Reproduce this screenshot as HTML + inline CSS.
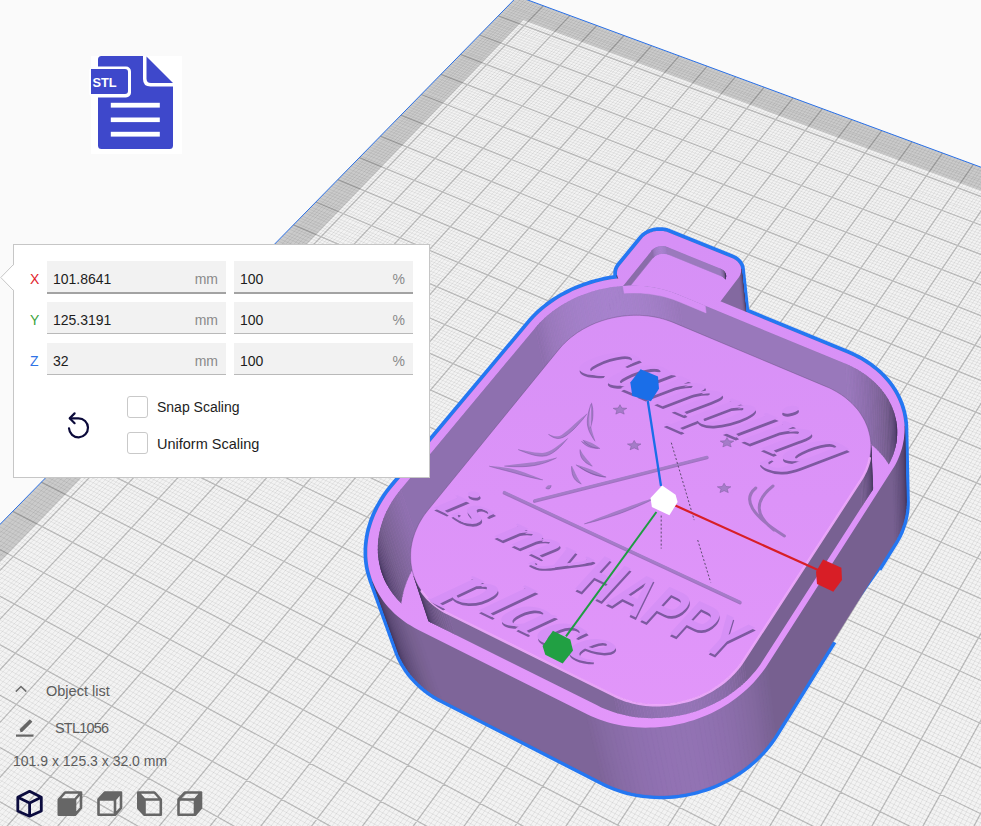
<!DOCTYPE html>
<html><head><meta charset="utf-8">
<style>
html,body{margin:0;padding:0;width:981px;height:826px;overflow:hidden;background:#fafafa;font-family:"Liberation Sans",sans-serif;}
.vp{position:absolute;left:0;top:0;}
.abs{position:absolute;}
#panel{position:absolute;left:13px;top:244px;width:415px;height:232px;border:1px solid #c6c6c6;background:#fff;}
.lbl{position:absolute;font-size:14px;line-height:16px;}
.fld{position:absolute;width:179px;height:31px;background:#f2f2f2;border-bottom:1px solid #b9b9b9;}
.fld.focus{border-bottom:2px solid #a3a3a3;height:31px;}
.fld .v{position:absolute;left:6px;top:10px;font-size:14px;line-height:16px;color:#1d1d1d;}
.fld .u{position:absolute;right:8px;top:10px;font-size:14px;line-height:16px;color:#8a8a8a;}
.cb{position:absolute;left:113px;width:19px;height:20px;border:1px solid #c9c9c9;border-radius:3px;background:#fff;}
.cbt{position:absolute;left:143px;font-size:14.5px;line-height:16px;color:#1d1d1d;}
.gray{color:#5f5f5f;}
</style></head><body>
<svg class="vp" width="981" height="826" viewBox="0 0 981 826">
<rect width="981" height="826" fill="#fafafa"/>
<polygon points="517.5,-3.8 1873.2,496.4 1316.3,2818.7 -691.1,1229.7" fill="#cbcbcb"/>
<polygon points="523.4,20.1 1867.2,521.5 1316.3,2818.7 -664.5,1250.7" fill="#f3f3f3"/>
<path d="M520 0L0 533M524 0L0 537M527 0L0 542M530 1L0 547M533 2L0 551M535 3L0 556M538 4L0 561M541 5L0 566M546 7L0 575M549 8L0 580M551 9L0 585M554 10L0 590M557 11L0 595M559 12L0 599M562 13L0 604M565 14L0 609M567 15L0 614M573 17L0 624M575 18L0 629M578 19L0 634M581 20L0 639M583 21L0 644M586 22L0 649M589 23L0 654M591 24L0 659M594 25L0 665M600 26L0 675M602 27L0 680M605 28L0 685M608 29L0 691M610 31L0 696M613 32L0 701M616 33L0 706M619 34L0 712M621 35L0 717M627 37L0 728M629 38L0 733M632 39L0 739M635 40L0 744M638 41L0 750M640 42L0 755M643 43L0 761M646 44L0 766M649 45L0 772M654 47L0 783M657 48L-0 788M660 49L0 794M663 50L0 800M665 51L0 805M668 52L0 811M671 53L0 817M674 54L0 823M676 55L2 826M682 57L12 826M685 58L17 826M688 59L22 826M690 60L27 826M693 61L33 826M696 62L38 826M699 63L43 826M702 64L48 826M704 65L53 826M710 67L63 826M713 68L68 826M716 69L73 826M719 70L78 826M721 71L83 826M724 72L88 826M727 74L93 826M730 75L98 826M733 76L104 826M738 78L114 826M741 79L119 826M744 80L124 826M747 81L129 826M750 82L134 826M753 83L139 826M756 84L144 826M758 85L149 826M761 86L154 826M767 88L164 826M770 89L170 826M773 90L175 826M776 92L180 826M779 93L185 826M782 94L190 826M784 95L195 826M787 96L200 826M790 97L205 826M796 99L215 826M799 100L220 826M802 101L225 826M805 102L230 826M808 103L236 826M811 104L241 826M814 105L246 826M816 107L251 826M819 108L256 826M825 110L266 826M828 111L271 826M831 112L276 826M834 113L281 826M837 114L286 826M840 115L291 826M843 116L296 826M846 117L302 826M849 119L307 826M855 121L317 826M858 122L322 826M861 123L327 826M864 124L332 826M867 125L337 826M870 126L342 826M873 127L347 826M876 128L352 826M879 130L357 826M885 132L368 826M888 133L373 826M891 134L378 826M894 135L383 826M897 136L388 826M900 137L393 826M903 138L398 826M906 140L403 826M909 141L408 826M915 143L418 826M918 144L424 826M921 145L429 826M924 146L434 826M927 147L439 826M930 149L444 826M933 150L449 826M936 151L454 826M939 152L459 826M946 154L469 826M949 155L474 826M952 156L479 826M955 158L485 826M958 159L490 826M961 160L495 826M964 161L500 826M967 162L505 826M970 163L510 826M976 166L520 826M980 167L525 826M981 170L530 826M981 176L535 826M981 182L541 826M981 188L546 826M981 193L551 826M981 199L556 826M981 205L561 826M981 217L571 826M981 223L576 826M981 229L581 826M981 235L586 826M981 241L591 826M981 247L597 826M981 253L602 826M981 259L607 826M981 265L612 826M981 278L622 826M981 284L627 826M981 290L632 826M981 297L637 826M981 303L642 826M981 310L648 826M981 316L653 826M981 323L658 826M981 329L663 826M981 342L673 826M981 349L678 826M981 356L683 826M981 362L688 826M981 369L693 826M981 376L698 826M981 383L704 826M981 390L709 826M981 397L714 826M981 411L724 826M981 418L729 826M981 425L734 826M981 432L739 826M981 439L744 826M981 446L749 826M981 454L755 826M981 461L760 826M981 468L765 826M981 483L775 826M981 490L780 826M981 498L785 826M981 506L790 826M981 513L795 826M981 521L800 826M981 529L806 826M981 536L811 826M981 544L816 826M981 560L826 826M981 568L831 826M981 576L836 826M981 584L841 826M981 592L846 826M981 600L851 826M981 608L857 826M981 617L862 826M981 625L867 826M981 642L877 826M981 650L882 826M981 659L887 826M981 667L892 826M981 676L897 826M981 685L903 826M981 694L908 826M981 702L913 826M981 711L918 826M981 729L928 826M981 738L933 826M981 747L938 826M981 756L943 826M981 766L948 826M981 775L954 826M981 784L959 826M981 794L964 826M981 803L969 826M981 822L979 826M518 0L981 171M513 1L981 174M511 3L981 177M509 5L981 180M507 6L981 182M506 8L981 185M504 10L981 188M502 12L981 191M500 14L981 194M496 18L981 199M495 20L981 202M493 22L981 205M491 23L981 208M489 25L981 211M487 27L981 214M485 29L981 216M483 31L981 219M481 33L981 222M478 37L981 228M476 39L981 231M474 41L981 234M472 43L981 237M470 45L981 240M468 47L981 243M466 49L981 246M464 51L981 249M462 52L981 252M459 56L981 258M457 58L981 261M455 60L981 264M453 62L981 267M451 64L981 270M449 66L981 273M447 68L981 276M445 70L981 279M443 72L981 282M439 76L981 288M437 78L981 291M435 80L981 294M433 82L981 297M431 84L981 300M429 86L981 303M427 88L981 306M425 90L981 310M423 93L981 313M419 97L981 319M417 99L981 322M415 101L981 325M413 103L981 329M411 105L981 332M409 107L981 335M407 109L981 338M405 111L981 341M403 113L981 345M399 117L981 351M397 119L981 354M395 121L981 358M393 124L981 361M391 126L981 364M389 128L981 367M387 130L981 371M384 132L981 374M382 134L981 377M378 138L981 384M376 141L981 387M374 143L981 391M372 145L981 394M370 147L981 397M368 149L981 401M366 151L981 404M363 153L981 408M361 156L981 411M357 160L981 418M355 162L981 421M353 164L981 425M351 166L981 428M349 169L981 432M346 171L981 435M344 173L981 439M342 175L981 442M340 177L981 446M336 182L981 453M333 184L981 456M331 186L981 460M329 189L981 463M327 191L981 467M325 193L981 470M322 195L981 474M320 198L981 478M318 200L981 481M314 204L981 488M311 207L981 492M309 209L981 496M307 211L981 499M305 213L981 503M302 216L981 507M300 218L981 511M298 220L981 514M296 223L981 518M291 227L981 525M289 229L981 529M287 232L981 533M284 234L981 537M282 236L981 540M280 239L981 544M278 241L981 548M275 243L981 552M273 246L981 556M268 251L981 563M266 253L981 567M264 255L981 571M261 258L981 575M259 260L981 579M257 262L981 583M254 265L981 587M252 267L981 591M250 270L981 595M245 274L981 603M243 277L981 607M240 279L981 611M238 282L981 615M235 284L981 619M233 286L981 623M231 289L981 627M228 291L981 631M226 294L981 635M221 299L981 643M219 301L981 647M216 304L981 651M214 306L981 656M211 309L981 660M209 311L981 664M207 314L981 668M204 316L981 672M202 319L981 676M197 324L981 685M194 326L981 689M192 329L981 693M189 331L981 698M187 334L981 702M184 336L981 706M182 339L981 711M179 341L981 715M177 344L981 719M172 349L981 728M169 352L981 732M167 354L981 737M164 357L981 741M162 359L981 746M159 362L981 750M157 365L981 755M154 367L981 759M151 370L981 764M146 375L981 773M144 378L981 777M141 380L981 782M139 383L981 786M136 386L981 791M133 388L981 795M131 391L981 800M128 394L981 805M126 396L981 809M120 402L981 819M118 404L981 823M115 407L977 826M112 410L967 826M110 412L958 826M107 415L948 826M104 418L938 826M102 421L929 826M99 423L919 826M94 429L900 826M91 432L890 826M88 434L880 826M86 437L871 826M83 440L861 826M80 443L851 826M77 445L842 826M75 448L832 826M72 451L822 826M66 457L803 826M64 459L793 826M61 462L784 826M58 465L774 826M55 468L764 826M53 471L755 826M50 474L745 826M47 477L735 826M44 479L726 826M38 485L706 826M36 488L697 826M33 491L687 826M30 494L677 826M27 497L668 826M24 500L658 826M21 503L648 826M19 505L639 826M16 508L629 826M10 514L610 826M7 517L600 826M4 520L590 826M1 523L581 826M0 527L571 826M0 531L561 826M-0 536L552 826M0 541L542 826M-0 545L533 826M0 554L513 826M0 559L504 826M0 563L494 826M0 568L484 826M-0 573L475 826M0 577L465 826M0 582L455 826M0 587L446 826M0 592L436 826M0 601L417 826M0 606L407 826M0 611L398 826M-0 616L388 826M-0 620L378 826M0 625L369 826M0 630L359 826M0 635L349 826M0 640L340 826M0 650L320 826M0 655L311 826M0 660L301 826M0 665L292 826M0 670L282 826M0 675L272 826M0 680L263 826M0 685L253 826M0 690L243 826M0 700L224 826M0 705L215 826M0 711L205 826M0 716L195 826M0 721L186 826M0 726L176 826M0 732L166 826M0 737L157 826M0 742L147 826M0 753L128 826M0 758L118 826M0 764L109 826M0 769L99 826M0 774L90 826M0 780L80 826M0 785L70 826M0 791L61 826M0 796L51 826M0 807L32 826M0 813L22 826M0 819L13 826M0 824L3 826" stroke="#000" stroke-opacity="0.065" stroke-width="1" fill="none"/>
<path d="M543.3 5.8L-658.9 1255.2M569.9 15.6L-625.6 1281.6M596.8 25.5L-591.6 1308.4M624.0 35.5L-557.2 1335.7M651.5 45.7L-522.1 1363.5M679.2 55.9L-486.4 1391.7M707.2 66.2L-450.1 1420.4M735.6 76.7L-413.2 1449.7M764.2 87.2L-375.6 1479.4M793.1 97.9L-337.3 1509.7M822.4 108.7L-298.4 1540.5M851.9 119.6L-258.8 1571.9M881.8 130.6L-218.4 1603.9M912.0 141.8L-177.3 1636.4M942.5 153.1L-135.4 1669.6M973.4 164.4L-92.7 1703.4M1004.6 176.0L-49.2 1737.8M1036.2 187.6L-4.9 1772.9M1068.1 199.4L40.3 1808.7M1100.3 211.3L86.4 1845.1M1133.0 223.3L133.4 1882.3M1166.0 235.5L181.3 1920.3M1199.4 247.8L230.2 1959.0M1233.2 260.3L280.1 1998.4M1267.3 272.9L331.0 2038.7M1301.9 285.6L383.0 2079.9M1336.8 298.5L436.0 2121.9M1372.2 311.6L490.2 2164.8M1408.0 324.8L545.6 2208.6M1444.2 338.2L602.1 2253.4M1480.9 351.7L659.9 2299.1M1518.0 365.4L719.0 2345.9M1555.5 379.2L779.4 2393.7M1593.6 393.3L841.2 2442.6M1632.0 407.5L904.4 2492.6M1671.0 421.8L969.1 2543.8M1710.4 436.4L1035.3 2596.2M1750.4 451.1L1103.0 2649.8M1790.8 466.0L1172.4 2704.8M1831.7 481.1L1243.5 2761.0M498.3 15.9L1865.8 527.5M479.5 35.0L1858.5 557.9M460.4 54.4L1851.0 589.0M441.0 74.3L1843.4 620.9M421.2 94.5L1835.5 653.6M400.9 115.2L1827.5 687.2M380.3 136.2L1819.2 721.5M359.3 157.7L1810.8 756.8M337.8 179.6L1802.1 793.0M315.9 202.0L1793.2 830.2M293.5 224.8L1784.0 868.4M270.7 248.2L1774.6 907.6M247.3 272.0L1765.0 947.9M223.5 296.3L1755.0 989.3M199.2 321.1L1744.8 1031.9M174.3 346.5L1734.3 1075.8M148.9 372.4L1723.5 1120.9M122.9 399.0L1712.3 1167.4M96.3 426.1L1700.8 1215.3M69.1 453.8L1689.0 1264.7M41.3 482.2L1676.8 1315.6M12.8 511.3L1664.2 1368.1M-16.3 541.0L1651.2 1422.3M-46.1 571.5L1637.7 1478.3M-76.7 602.7L1623.9 1536.2M-108.0 634.7L1609.5 1596.0M-140.1 667.4L1594.7 1657.9M-173.0 701.0L1579.3 1721.9M-206.8 735.4L1563.4 1788.2M-241.4 770.8L1546.9 1856.9M-276.9 807.0L1529.9 1928.2M-313.4 844.3L1512.1 2002.1M-350.8 882.5L1493.7 2078.9M-389.3 921.7L1474.6 2158.7M-428.8 962.1L1454.7 2241.7M-469.5 1003.6L1434.0 2328.1M-511.3 1046.2L1412.4 2418.0M-554.3 1090.1L1389.9 2511.8M-598.5 1135.3L1366.4 2609.7M-644.1 1181.8L1341.9 2711.8" stroke="#000" stroke-opacity="0.23" stroke-width="1.3" fill="none"/>
<path d="M-691.1 1229.7L517.5 -3.8L1873.2 496.4" stroke="#2a70e6" stroke-width="1.0" fill="none"/>
<defs><clipPath id="cpGap"><path d="M0 0H981V826H0Z M880 570 L900 580 L850 650 L830 640Z" clip-rule="evenodd"/></clipPath>
<clipPath id="cpRim"><path d="M535.3 327.7L537.5 325.1L539.8 322.6L542.2 320.2L544.7 317.8L547.3 315.5L550.1 313.2L552.9 311.1L555.7 309.0L558.7 307.0L561.7 305.0L564.9 303.2L568.0 301.4L571.3 299.7L574.6 298.1L578.0 296.6L581.4 295.2L584.9 293.9L588.4 292.7L592.0 291.5L595.6 290.5L599.2 289.6L602.9 288.7L606.6 288.0L610.3 287.3L614.0 286.8L617.7 286.4L621.4 286.0L625.2 285.8L628.9 285.6L632.6 285.6L636.3 285.7L640.0 285.9L643.7 286.1L647.3 286.5L650.9 287.0L654.5 287.6L658.0 288.3L661.5 289.1L665.0 289.9L668.4 290.9L671.7 292.0L675.0 293.2L678.2 294.5L845.9 363.8L848.9 365.1L851.9 366.5L854.8 368.0L857.7 369.6L860.4 371.2L863.1 373.0L865.7 374.8L868.3 376.7L870.7 378.7L873.0 380.7L875.3 382.8L877.5 385.0L879.5 387.2L881.5 389.5L883.4 391.9L885.1 394.3L886.8 396.8L888.3 399.3L889.7 401.9L891.0 404.5L892.2 407.2L893.2 409.9L894.2 412.6L895.0 415.4L895.7 418.2L896.3 421.0L896.7 423.9L897.0 426.7L897.2 429.6L897.2 432.5L897.1 435.4L896.9 438.3L896.6 441.2L896.1 444.1L895.5 446.9L894.7 449.8L893.9 452.6L892.9 455.5L891.7 458.3L890.5 461.0L889.1 463.8L887.6 466.5L886.0 469.1L762.6 661.0L760.4 664.4L758.0 667.7L755.5 670.9L752.8 674.1L750.0 677.2L747.1 680.2L744.1 683.1L740.9 685.9L737.6 688.6L734.2 691.3L730.7 693.8L727.2 696.2L723.5 698.5L719.7 700.7L715.8 702.8L711.9 704.8L707.8 706.6L703.7 708.3L699.6 709.9L695.4 711.4L691.1 712.7L686.8 713.9L682.5 714.9L678.1 715.8L673.7 716.6L669.3 717.2L664.8 717.6L660.4 718.0L655.9 718.1L651.5 718.2L647.1 718.1L642.7 717.8L638.3 717.4L634.0 716.9L629.7 716.2L625.5 715.3L621.3 714.3L617.1 713.2L613.1 712.0L609.1 710.6L605.1 709.1L601.3 707.4L597.6 705.6L424.2 619.3L420.7 617.5L417.4 615.6L414.2 613.6L411.1 611.4L408.2 609.2L405.3 606.9L402.6 604.5L400.0 602.0L397.5 599.4L395.2 596.7L393.0 593.9L390.9 591.0L389.0 588.1L387.2 585.1L385.6 582.1L384.1 579.0L382.8 575.8L381.6 572.6L380.6 569.3L379.8 566.0L379.0 562.6L378.5 559.3L378.1 555.9L377.8 552.4L377.7 549.0L377.8 545.5L378.0 542.1L378.3 538.6L378.9 535.1L379.5 531.7L380.3 528.2L381.3 524.8L382.4 521.4L383.6 518.0L385.0 514.6L386.5 511.3L388.2 508.0L390.0 504.7L391.9 501.5L393.9 498.4L396.1 495.3L398.4 492.2L400.8 489.2Z"/></clipPath>
<clipPath id="cpRec"><path d="M651.5 250.8L651.7 250.5L652.0 250.2L652.2 249.9L652.5 249.7L652.8 249.4L653.1 249.2L653.4 249.0L653.7 248.7L654.0 248.5L654.3 248.3L654.7 248.1L655.0 247.9L655.4 247.7L655.8 247.5L656.1 247.4L656.5 247.2L656.9 247.1L657.3 246.9L657.7 246.8L658.1 246.7L658.5 246.6L658.9 246.5L659.3 246.4L659.8 246.3L660.2 246.3L660.6 246.2L661.0 246.2L661.4 246.2L661.9 246.1L662.3 246.1L662.7 246.2L663.1 246.2L663.5 246.2L664.0 246.2L664.4 246.3L664.8 246.4L665.2 246.4L665.6 246.5L666.0 246.6L666.3 246.7L666.7 246.9L667.1 247.0L667.5 247.1L720.4 268.6L720.7 268.8L721.1 268.9L721.4 269.1L721.8 269.3L722.1 269.5L722.4 269.7L722.7 269.9L723.0 270.1L723.3 270.3L723.6 270.6L723.8 270.8L724.1 271.1L724.3 271.3L724.5 271.6L724.7 271.9L724.9 272.1L725.1 272.4L725.3 272.7L725.4 273.0L725.6 273.3L725.7 273.6L725.8 273.9L725.9 274.2L725.9 274.5L726.0 274.9L726.0 275.2L726.1 275.5L726.1 275.8L726.1 276.1L726.1 276.5L726.0 276.8L726.0 277.1L725.9 277.4L725.8 277.7L725.7 278.1L725.6 278.4L725.5 278.7L725.4 279.0L725.2 279.3L725.0 279.6L724.8 279.9L724.6 280.2L724.4 280.5L685.5 331.3L685.3 331.6L685.0 331.9L684.7 332.1L684.5 332.4L684.2 332.7L683.9 333.0L683.6 333.2L683.2 333.5L682.9 333.7L682.6 333.9L682.2 334.1L681.8 334.4L681.5 334.6L681.1 334.7L680.7 334.9L680.3 335.1L679.9 335.3L679.5 335.4L679.1 335.5L678.7 335.7L678.2 335.8L677.8 335.9L677.4 336.0L677.0 336.0L676.5 336.1L676.1 336.2L675.6 336.2L675.2 336.2L674.8 336.2L674.3 336.2L673.9 336.2L673.4 336.2L673.0 336.2L672.6 336.1L672.2 336.1L671.7 336.0L671.3 335.9L670.9 335.8L670.5 335.7L670.1 335.6L669.7 335.5L669.3 335.3L668.9 335.2L615.0 312.4L614.6 312.3L614.3 312.1L613.9 311.9L613.6 311.7L613.3 311.5L613.0 311.3L612.7 311.1L612.4 310.9L612.1 310.6L611.8 310.4L611.6 310.1L611.4 309.9L611.1 309.6L610.9 309.3L610.7 309.0L610.6 308.7L610.4 308.5L610.2 308.2L610.1 307.9L610.0 307.5L609.9 307.2L609.8 306.9L609.7 306.6L609.6 306.3L609.6 306.0L609.6 305.6L609.6 305.3L609.6 305.0L609.6 304.6L609.6 304.3L609.7 304.0L609.7 303.6L609.8 303.3L609.9 303.0L610.0 302.7L610.2 302.3L610.3 302.0L610.5 301.7L610.6 301.4L610.8 301.1L611.0 300.8L611.2 300.5L611.5 300.2Z"/></clipPath>
<linearGradient id="gTop" gradientUnits="userSpaceOnUse" x1="0" y1="240" x2="0" y2="760"><stop offset="0" stop-color="#d690f6"/><stop offset="0.5" stop-color="#dc93f8"/><stop offset="1" stop-color="#e397fa"/></linearGradient></defs>
<path d="M399.6 655.9L398.2 652.5L372.7 581.7L371.5 578.2L370.4 574.6L369.4 570.9L368.6 567.3L368.0 563.5L367.6 559.8L367.3 556.0L367.3 552.2L367.3 548.4L367.6 544.6L368.0 540.8L368.6 537.0L369.3 533.2L370.2 529.4L371.3 525.7L372.5 521.9L373.9 518.2L375.4 514.5L377.1 510.9L378.9 507.3L380.9 503.7L383.0 500.2L385.2 496.7L387.6 493.3L390.1 490.0L392.8 486.7L529.5 323.3L531.9 320.5L534.4 317.8L537.1 315.1L539.8 312.5L542.7 310.0L545.7 307.6L548.7 305.2L551.9 302.9L555.1 300.7L558.5 298.6L561.9 296.6L565.4 294.7L568.9 292.9L572.5 291.1L576.2 289.5L580.0 287.9L583.8 286.5L587.6 285.2L591.5 283.9L595.5 282.8L599.4 281.8L603.4 280.8L607.4 280.0L611.5 279.3L615.5 278.8L619.6 278.3L623.7 277.9L627.8 277.6L631.8 277.5L635.9 277.5L639.9 277.6L644.0 277.7L648.0 278.0L652.0 278.5L655.9 279.0L659.8 279.6L663.7 280.4L667.5 281.2L671.3 282.2L675.0 283.3L678.6 284.4L682.2 285.7L685.7 287.1L847.8 353.8L851.1 355.2L854.4 356.8L857.6 358.4L860.7 360.1L863.8 361.9L866.8 363.9L869.6 365.8L872.4 367.9L875.1 370.1L877.7 372.3L880.2 374.6L882.6 377.0L884.9 379.5L887.1 382.0L889.1 384.6L891.1 387.3L892.9 390.0L894.6 392.8L896.1 395.6L897.6 398.5L898.9 401.5L900.1 404.4L901.1 407.5L902.0 410.5L902.8 413.6L903.4 416.7L903.9 419.8L904.3 423.0L904.5 426.2L906.0 499.6L906.1 502.7L906.0 505.9L905.8 509.0L905.4 512.2L904.9 515.3L904.3 518.4L903.5 521.5L902.6 524.6L901.5 527.7L900.4 530.8L899.0 533.8L897.6 536.8L896.0 539.7L894.3 542.6L775.5 733.9L773.2 737.6L770.7 741.1L768.0 744.6L765.3 748.0L762.4 751.3L759.3 754.5L756.2 757.7L752.9 760.7L749.4 763.7L745.9 766.5L742.3 769.2L738.5 771.8L734.7 774.3L730.7 776.7L726.7 778.9L722.5 781.0L718.3 783.0L714.0 784.9L709.7 786.6L705.3 788.1L700.8 789.5L696.3 790.8L691.8 791.9L687.2 792.9L682.6 793.7L677.9 794.4L673.3 794.9L668.6 795.2L664.0 795.4L659.3 795.4L654.7 795.3L650.1 795.0L645.5 794.6L641.0 794.0L636.5 793.3L632.0 792.4L627.6 791.3L623.3 790.1L619.0 788.7L614.8 787.2L610.7 785.6L606.7 783.8L602.8 781.9L441.9 699.5L438.3 697.6L434.8 695.5L431.5 693.4L428.2 691.1L425.1 688.7L422.1 686.1L419.2 683.5L416.4 680.8L413.8 678.0L411.3 675.1L409.0 672.1L406.8 669.0L404.8 665.8L402.9 662.6L401.2 659.3ZM741.1 268.8L749.0 343.8L749.1 344.3L749.1 344.9L749.1 345.4L749.1 345.9L749.0 346.4L749.0 347.0L748.9 347.5L748.7 348.0L748.6 348.6L748.4 349.1L748.2 349.6L748.0 350.1L747.7 350.6L747.5 351.1L747.2 351.6L746.9 352.1L746.5 352.6L726.4 380.0L726.0 380.5L725.6 381.0L725.2 381.4L724.8 381.9L724.3 382.3L723.9 382.8L723.4 383.2L722.9 383.6L722.4 383.9L721.8 384.3L721.3 384.7L720.7 385.0L720.1 385.3L719.5 385.6L718.9 385.9L718.3 386.2L717.7 386.5L717.0 386.7L716.4 386.9L715.7 387.1L715.0 387.3L714.4 387.5L713.7 387.6L713.0 387.7L712.3 387.8L711.6 387.9L710.9 388.0L710.2 388.0L709.5 388.1L708.8 388.1L708.1 388.1L707.4 388.0L706.7 388.0L706.1 387.9L705.4 387.8L704.7 387.7L704.1 387.5L703.4 387.4L702.8 387.2L702.1 387.0L701.5 386.8L700.9 386.6L700.3 386.3L638.5 359.8L637.9 359.6L637.4 359.3L636.8 359.0L636.3 358.7L635.8 358.4L635.3 358.0L634.8 357.7L634.4 357.3L633.9 356.9L633.5 356.5L633.1 356.1L632.7 355.7L632.4 355.3L632.0 354.8L631.7 354.4L631.4 353.9L631.2 353.5L630.9 353.0L630.7 352.5L630.5 352.0L630.3 351.5L630.2 351.0L630.1 350.5L630.0 349.9L617.1 275.1L617.0 274.5L617.0 274.0L617.0 273.5L617.0 272.9L617.0 272.4L617.1 271.9L617.1 271.3L617.3 270.8L617.4 270.3L617.5 269.7L617.7 269.2L617.9 268.7L618.2 268.2L618.4 267.7L618.7 267.2L619.0 266.7L619.4 266.2L619.7 265.7L620.1 265.2L642.0 238.5L642.4 238.0L642.8 237.6L643.2 237.1L643.6 236.7L644.1 236.3L644.6 235.9L645.1 235.5L645.6 235.1L646.2 234.8L646.7 234.4L647.3 234.1L647.9 233.8L648.5 233.4L649.1 233.2L649.7 232.9L650.3 232.6L651.0 232.4L651.6 232.2L652.3 232.0L652.9 231.8L653.6 231.6L654.3 231.4L655.0 231.3L655.7 231.2L656.4 231.1L657.1 231.0L657.8 230.9L658.5 230.9L659.2 230.9L659.9 230.9L660.6 230.9L661.3 230.9L662.0 231.0L662.6 231.0L663.3 231.1L664.0 231.2L664.7 231.4L665.3 231.5L666.0 231.7L666.6 231.8L667.2 232.0L667.8 232.2L668.4 232.5L731.7 258.0L732.3 258.2L732.9 258.5L733.4 258.8L734.0 259.1L734.5 259.4L735.1 259.7L735.6 260.1L736.0 260.4L736.5 260.8L737.0 261.2L737.4 261.6L737.8 262.0L738.2 262.4L738.6 262.9L738.9 263.3L739.2 263.8L739.5 264.3L739.8 264.7L740.1 265.2L740.3 265.7L740.5 266.2L740.7 266.7L740.8 267.3L740.9 267.8L741.1 268.3Z" fill="#2477f2" stroke="#2477f2" stroke-width="7.5" stroke-linejoin="round" clip-path="url(#cpGap)"/>
<path d="M399.6 655.9L398.2 652.5L372.7 581.7L371.5 578.2L370.4 574.6L369.4 570.9L368.6 567.3L368.0 563.5L367.6 559.8L367.3 556.0L367.3 552.2L367.3 548.4L367.6 544.6L368.0 540.8L368.6 537.0L369.3 533.2L370.2 529.4L371.3 525.7L372.5 521.9L373.9 518.2L375.4 514.5L377.1 510.9L378.9 507.3L380.9 503.7L383.0 500.2L385.2 496.7L387.6 493.3L390.1 490.0L392.8 486.7L529.5 323.3L531.9 320.5L534.4 317.8L537.1 315.1L539.8 312.5L542.7 310.0L545.7 307.6L548.7 305.2L551.9 302.9L555.1 300.7L558.5 298.6L561.9 296.6L565.4 294.7L568.9 292.9L572.5 291.1L576.2 289.5L580.0 287.9L583.8 286.5L587.6 285.2L591.5 283.9L595.5 282.8L599.4 281.8L603.4 280.8L607.4 280.0L611.5 279.3L615.5 278.8L619.6 278.3L623.7 277.9L627.8 277.6L631.8 277.5L635.9 277.5L639.9 277.6L644.0 277.7L648.0 278.0L652.0 278.5L655.9 279.0L659.8 279.6L663.7 280.4L667.5 281.2L671.3 282.2L675.0 283.3L678.6 284.4L682.2 285.7L685.7 287.1L847.8 353.8L851.1 355.2L854.4 356.8L857.6 358.4L860.7 360.1L863.8 361.9L866.8 363.9L869.6 365.8L872.4 367.9L875.1 370.1L877.7 372.3L880.2 374.6L882.6 377.0L884.9 379.5L887.1 382.0L889.1 384.6L891.1 387.3L892.9 390.0L894.6 392.8L896.1 395.6L897.6 398.5L898.9 401.5L900.1 404.4L901.1 407.5L902.0 410.5L902.8 413.6L903.4 416.7L903.9 419.8L904.3 423.0L904.5 426.2L906.0 499.6L906.1 502.7L906.0 505.9L905.8 509.0L905.4 512.2L904.9 515.3L904.3 518.4L903.5 521.5L902.6 524.6L901.5 527.7L900.4 530.8L899.0 533.8L897.6 536.8L896.0 539.7L894.3 542.6L775.5 733.9L773.2 737.6L770.7 741.1L768.0 744.6L765.3 748.0L762.4 751.3L759.3 754.5L756.2 757.7L752.9 760.7L749.4 763.7L745.9 766.5L742.3 769.2L738.5 771.8L734.7 774.3L730.7 776.7L726.7 778.9L722.5 781.0L718.3 783.0L714.0 784.9L709.7 786.6L705.3 788.1L700.8 789.5L696.3 790.8L691.8 791.9L687.2 792.9L682.6 793.7L677.9 794.4L673.3 794.9L668.6 795.2L664.0 795.4L659.3 795.4L654.7 795.3L650.1 795.0L645.5 794.6L641.0 794.0L636.5 793.3L632.0 792.4L627.6 791.3L623.3 790.1L619.0 788.7L614.8 787.2L610.7 785.6L606.7 783.8L602.8 781.9L441.9 699.5L438.3 697.6L434.8 695.5L431.5 693.4L428.2 691.1L425.1 688.7L422.1 686.1L419.2 683.5L416.4 680.8L413.8 678.0L411.3 675.1L409.0 672.1L406.8 669.0L404.8 665.8L402.9 662.6L401.2 659.3ZM741.1 268.8L749.0 343.8L749.1 344.3L749.1 344.9L749.1 345.4L749.1 345.9L749.0 346.4L749.0 347.0L748.9 347.5L748.7 348.0L748.6 348.6L748.4 349.1L748.2 349.6L748.0 350.1L747.7 350.6L747.5 351.1L747.2 351.6L746.9 352.1L746.5 352.6L726.4 380.0L726.0 380.5L725.6 381.0L725.2 381.4L724.8 381.9L724.3 382.3L723.9 382.8L723.4 383.2L722.9 383.6L722.4 383.9L721.8 384.3L721.3 384.7L720.7 385.0L720.1 385.3L719.5 385.6L718.9 385.9L718.3 386.2L717.7 386.5L717.0 386.7L716.4 386.9L715.7 387.1L715.0 387.3L714.4 387.5L713.7 387.6L713.0 387.7L712.3 387.8L711.6 387.9L710.9 388.0L710.2 388.0L709.5 388.1L708.8 388.1L708.1 388.1L707.4 388.0L706.7 388.0L706.1 387.9L705.4 387.8L704.7 387.7L704.1 387.5L703.4 387.4L702.8 387.2L702.1 387.0L701.5 386.8L700.9 386.6L700.3 386.3L638.5 359.8L637.9 359.6L637.4 359.3L636.8 359.0L636.3 358.7L635.8 358.4L635.3 358.0L634.8 357.7L634.4 357.3L633.9 356.9L633.5 356.5L633.1 356.1L632.7 355.7L632.4 355.3L632.0 354.8L631.7 354.4L631.4 353.9L631.2 353.5L630.9 353.0L630.7 352.5L630.5 352.0L630.3 351.5L630.2 351.0L630.1 350.5L630.0 349.9L617.1 275.1L617.0 274.5L617.0 274.0L617.0 273.5L617.0 272.9L617.0 272.4L617.1 271.9L617.1 271.3L617.3 270.8L617.4 270.3L617.5 269.7L617.7 269.2L617.9 268.7L618.2 268.2L618.4 267.7L618.7 267.2L619.0 266.7L619.4 266.2L619.7 265.7L620.1 265.2L642.0 238.5L642.4 238.0L642.8 237.6L643.2 237.1L643.6 236.7L644.1 236.3L644.6 235.9L645.1 235.5L645.6 235.1L646.2 234.8L646.7 234.4L647.3 234.1L647.9 233.8L648.5 233.4L649.1 233.2L649.7 232.9L650.3 232.6L651.0 232.4L651.6 232.2L652.3 232.0L652.9 231.8L653.6 231.6L654.3 231.4L655.0 231.3L655.7 231.2L656.4 231.1L657.1 231.0L657.8 230.9L658.5 230.9L659.2 230.9L659.9 230.9L660.6 230.9L661.3 230.9L662.0 231.0L662.6 231.0L663.3 231.1L664.0 231.2L664.7 231.4L665.3 231.5L666.0 231.7L666.6 231.8L667.2 232.0L667.8 232.2L668.4 232.5L731.7 258.0L732.3 258.2L732.9 258.5L733.4 258.8L734.0 259.1L734.5 259.4L735.1 259.7L735.6 260.1L736.0 260.4L736.5 260.8L737.0 261.2L737.4 261.6L737.8 262.0L738.2 262.4L738.6 262.9L738.9 263.3L739.2 263.8L739.5 264.3L739.8 264.7L740.1 265.2L740.3 265.7L740.5 266.2L740.7 266.7L740.8 267.3L740.9 267.8L741.1 268.3Z" fill="#7d6499"/>
<path d="M630.1 350.5L630.0 349.9L617.1 275.1L617.2 275.6Z" fill="#42335c" stroke="#42335c" stroke-width="0.6" />
<path d="M630.2 351.0L630.1 350.5L617.2 275.6L617.3 276.1Z" fill="#463760" stroke="#463760" stroke-width="0.6" />
<path d="M630.3 351.5L630.2 351.0L617.3 276.1L617.5 276.6Z" fill="#4b3b65" stroke="#4b3b65" stroke-width="0.6" />
<path d="M630.5 352.0L630.3 351.5L617.5 276.6L617.7 277.1Z" fill="#4f3f69" stroke="#4f3f69" stroke-width="0.6" />
<path d="M630.7 352.5L630.5 352.0L617.7 277.1L617.9 277.6Z" fill="#54436e" stroke="#54436e" stroke-width="0.6" />
<path d="M630.9 353.0L630.7 352.5L617.9 277.6L618.1 278.1Z" fill="#594772" stroke="#594772" stroke-width="0.6" />
<path d="M631.2 353.5L630.9 353.0L618.1 278.1L618.3 278.6Z" fill="#5d4b77" stroke="#5d4b77" stroke-width="0.6" />
<path d="M631.4 353.9L631.2 353.5L618.3 278.6L618.6 279.1Z" fill="#624f7b" stroke="#624f7b" stroke-width="0.6" />
<path d="M631.7 354.4L631.4 353.9L618.6 279.1L618.9 279.5Z" fill="#66527f" stroke="#66527f" stroke-width="0.6" />
<path d="M632.0 354.8L631.7 354.4L618.9 279.5L619.2 280.0Z" fill="#6a5684" stroke="#6a5684" stroke-width="0.6" />
<path d="M632.4 355.3L632.0 354.8L619.2 280.0L619.6 280.4Z" fill="#6f5a88" stroke="#6f5a88" stroke-width="0.6" />
<path d="M632.7 355.7L632.4 355.3L619.6 280.4L620.0 280.9Z" fill="#735d8c" stroke="#735d8c" stroke-width="0.6" />
<path d="M633.1 356.1L632.7 355.7L620.0 280.9L620.3 281.3Z" fill="#776190" stroke="#776190" stroke-width="0.6" />
<path d="M633.5 356.5L633.1 356.1L620.3 281.3L620.8 281.7Z" fill="#7a6294" stroke="#7a6294" stroke-width="0.6" />
<path d="M633.9 356.9L633.5 356.5L620.8 281.7L621.2 282.1Z" fill="#7d6497" stroke="#7d6497" stroke-width="0.6" />
<path d="M634.4 357.3L633.9 356.9L621.2 282.1L621.6 282.5Z" fill="#80669b" stroke="#80669b" stroke-width="0.6" />
<path d="M634.8 357.7L634.4 357.3L621.6 282.5L622.1 282.9Z" fill="#82689f" stroke="#82689f" stroke-width="0.6" />
<path d="M635.3 358.0L634.8 357.7L622.1 282.9L622.6 283.2Z" fill="#856aa2" stroke="#856aa2" stroke-width="0.6" />
<path d="M635.8 358.4L635.3 358.0L622.6 283.2L623.1 283.6Z" fill="#886ba6" stroke="#886ba6" stroke-width="0.6" />
<path d="M636.3 358.7L635.8 358.4L623.1 283.6L623.7 283.9Z" fill="#8a6da9" stroke="#8a6da9" stroke-width="0.6" />
<path d="M636.8 359.0L636.3 358.7L623.7 283.9L624.2 284.2Z" fill="#8d6fad" stroke="#8d6fad" stroke-width="0.6" />
<path d="M749.0 343.8L749.1 344.3L741.2 269.4L741.1 268.8Z" fill="#41335b" stroke="#41335b" stroke-width="0.6" />
<path d="M637.4 359.3L636.8 359.0L624.2 284.2L624.8 284.5Z" fill="#8f70b0" stroke="#8f70b0" stroke-width="0.6" />
<path d="M749.1 344.3L749.1 344.9L741.2 269.9L741.2 269.4Z" fill="#463760" stroke="#463760" stroke-width="0.6" />
<path d="M637.9 359.6L637.4 359.3L624.8 284.5L625.4 284.8Z" fill="#9272b3" stroke="#9272b3" stroke-width="0.6" />
<path d="M638.5 359.8L637.9 359.6L625.4 284.8L626.0 285.0Z" fill="#9575b6" stroke="#9575b6" stroke-width="0.6" />
<path d="M749.1 344.9L749.1 345.4L741.2 270.4L741.2 269.9Z" fill="#4a3b64" stroke="#4a3b64" stroke-width="0.6" />
<path d="M749.1 345.4L749.1 345.9L741.2 271.0L741.2 270.4Z" fill="#4f3f69" stroke="#4f3f69" stroke-width="0.6" />
<path d="M749.1 345.9L749.0 346.4L741.1 271.5L741.2 271.0Z" fill="#53426d" stroke="#53426d" stroke-width="0.6" />
<path d="M749.0 346.4L749.0 347.0L741.0 272.0L741.1 271.5Z" fill="#584671" stroke="#584671" stroke-width="0.6" />
<path d="M749.0 347.0L748.9 347.5L740.9 272.6L741.0 272.0Z" fill="#5c4a76" stroke="#5c4a76" stroke-width="0.6" />
<path d="M748.9 347.5L748.7 348.0L740.8 273.1L740.9 272.6Z" fill="#614e7a" stroke="#614e7a" stroke-width="0.6" />
<path d="M748.7 348.0L748.6 348.6L740.6 273.6L740.8 273.1Z" fill="#65527f" stroke="#65527f" stroke-width="0.6" />
<path d="M748.6 348.6L748.4 349.1L740.5 274.1L740.6 273.6Z" fill="#6a5583" stroke="#6a5583" stroke-width="0.6" />
<path d="M748.4 349.1L748.2 349.6L740.3 274.7L740.5 274.1Z" fill="#6e5987" stroke="#6e5987" stroke-width="0.6" />
<path d="M748.2 349.6L748.0 350.1L740.0 275.2L740.3 274.7Z" fill="#725d8b" stroke="#725d8b" stroke-width="0.6" />
<path d="M748.0 350.1L747.7 350.6L739.8 275.7L740.0 275.2Z" fill="#76608f" stroke="#76608f" stroke-width="0.6" />
<path d="M747.7 350.6L747.5 351.1L739.5 276.2L739.8 275.7Z" fill="#796293" stroke="#796293" stroke-width="0.6" />
<path d="M747.5 351.1L747.2 351.6L739.2 276.7L739.5 276.2Z" fill="#7c6497" stroke="#7c6497" stroke-width="0.6" />
<path d="M747.2 351.6L746.9 352.1L738.9 277.2L739.2 276.7Z" fill="#7f669a" stroke="#7f669a" stroke-width="0.6" />
<path d="M746.9 352.1L746.5 352.6L738.5 277.7L738.9 277.2Z" fill="#82679e" stroke="#82679e" stroke-width="0.6" />
<path d="M700.3 386.3L638.5 359.8L626.0 285.0L690.2 311.8Z" fill="#9676b8" stroke="#9676b8" stroke-width="0.6" />
<path d="M746.5 352.6L726.4 380.0L717.4 305.4L738.5 277.7Z" fill="#8369a0" stroke="#8369a0" stroke-width="0.6" />
<path d="M726.4 380.0L726.0 380.5L717.0 305.9L717.4 305.4Z" fill="#856aa2" stroke="#856aa2" stroke-width="0.6" />
<path d="M726.0 380.5L725.6 381.0L716.6 306.3L717.0 305.9Z" fill="#876ba6" stroke="#876ba6" stroke-width="0.6" />
<path d="M725.6 381.0L725.2 381.4L716.2 306.8L716.6 306.3Z" fill="#8a6da9" stroke="#8a6da9" stroke-width="0.6" />
<path d="M725.2 381.4L724.8 381.9L715.7 307.2L716.2 306.8Z" fill="#8c6fac" stroke="#8c6fac" stroke-width="0.6" />
<path d="M724.8 381.9L724.3 382.3L715.3 307.7L715.7 307.2Z" fill="#8f70af" stroke="#8f70af" stroke-width="0.6" />
<path d="M724.3 382.3L723.9 382.8L714.8 308.1L715.3 307.7Z" fill="#9172b2" stroke="#9172b2" stroke-width="0.6" />
<path d="M723.9 382.8L723.4 383.2L714.3 308.5L714.8 308.1Z" fill="#9474b5" stroke="#9474b5" stroke-width="0.6" />
<path d="M723.4 383.2L722.9 383.6L713.7 308.9L714.3 308.5Z" fill="#9676b8" stroke="#9676b8" stroke-width="0.6" />
<path d="M700.9 386.6L700.3 386.3L690.2 311.8L690.8 312.0Z" fill="#9878ba" stroke="#9878ba" stroke-width="0.6" />
<path d="M722.9 383.6L722.4 383.9L713.2 309.3L713.7 308.9Z" fill="#9978bb" stroke="#9978bb" stroke-width="0.6" />
<path d="M701.5 386.8L700.9 386.6L690.8 312.0L691.4 312.2Z" fill="#9a79bc" stroke="#9a79bc" stroke-width="0.6" />
<path d="M722.4 383.9L721.8 384.3L712.6 309.7L713.2 309.3Z" fill="#9a79bd" stroke="#9a79bd" stroke-width="0.6" />
<path d="M702.1 387.0L701.5 386.8L691.4 312.2L692.1 312.4Z" fill="#9b7abe" stroke="#9b7abe" stroke-width="0.6" />
<path d="M721.8 384.3L721.3 384.7L712.0 310.1L712.6 309.7Z" fill="#9c7abe" stroke="#9c7abe" stroke-width="0.6" />
<path d="M702.8 387.2L702.1 387.0L692.1 312.4L692.8 312.6Z" fill="#9d7bbf" stroke="#9d7bbf" stroke-width="0.6" />
<path d="M721.3 384.7L720.7 385.0L711.5 310.4L712.0 310.1Z" fill="#9d7bc0" stroke="#9d7bc0" stroke-width="0.6" />
<path d="M703.4 387.4L702.8 387.2L692.8 312.6L693.4 312.8Z" fill="#9e7cc1" stroke="#9e7cc1" stroke-width="0.6" />
<path d="M720.7 385.0L720.1 385.3L710.8 310.7L711.5 310.4Z" fill="#9e7cc1" stroke="#9e7cc1" stroke-width="0.6" />
<path d="M704.1 387.5L703.4 387.4L693.4 312.8L694.1 313.0Z" fill="#9f7cc2" stroke="#9f7cc2" stroke-width="0.6" />
<path d="M720.1 385.3L719.5 385.6L710.2 311.0L710.8 310.7Z" fill="#9f7dc2" stroke="#9f7dc2" stroke-width="0.6" />
<path d="M704.7 387.7L704.1 387.5L694.1 313.0L694.8 313.1Z" fill="#9f7dc3" stroke="#9f7dc3" stroke-width="0.6" />
<path d="M719.5 385.6L718.9 385.9L709.6 311.3L710.2 311.0Z" fill="#a07dc3" stroke="#a07dc3" stroke-width="0.6" />
<path d="M705.4 387.8L704.7 387.7L694.8 313.1L695.5 313.2Z" fill="#a07ec4" stroke="#a07ec4" stroke-width="0.6" />
<path d="M718.9 385.9L718.3 386.2L708.9 311.6L709.6 311.3Z" fill="#a07ec5" stroke="#a07ec5" stroke-width="0.6" />
<path d="M706.1 387.9L705.4 387.8L695.5 313.2L696.2 313.3Z" fill="#a17ec5" stroke="#a17ec5" stroke-width="0.6" />
<path d="M718.3 386.2L717.7 386.5L708.3 311.9L708.9 311.6Z" fill="#a17ec6" stroke="#a17ec6" stroke-width="0.6" />
<path d="M706.7 388.0L706.1 387.9L696.2 313.3L696.9 313.4Z" fill="#a27fc6" stroke="#a27fc6" stroke-width="0.6" />
<path d="M717.7 386.5L717.0 386.7L707.6 312.1L708.3 311.9Z" fill="#a27fc6" stroke="#a27fc6" stroke-width="0.6" />
<path d="M707.4 388.0L706.7 388.0L696.9 313.4L697.6 313.4Z" fill="#a27fc7" stroke="#a27fc7" stroke-width="0.6" />
<path d="M717.0 386.7L716.4 386.9L706.9 312.3L707.6 312.1Z" fill="#a27fc7" stroke="#a27fc7" stroke-width="0.6" />
<path d="M708.1 388.1L707.4 388.0L697.6 313.4L698.3 313.5Z" fill="#a380c8" stroke="#a380c8" stroke-width="0.6" />
<path d="M716.4 386.9L715.7 387.1L706.2 312.5L706.9 312.3Z" fill="#a380c8" stroke="#a380c8" stroke-width="0.6" />
<path d="M708.8 388.1L708.1 388.1L698.3 313.5L699.1 313.5Z" fill="#a380c8" stroke="#a380c8" stroke-width="0.6" />
<path d="M715.7 387.1L715.0 387.3L705.5 312.7L706.2 312.5Z" fill="#a380c8" stroke="#a380c8" stroke-width="0.6" />
<path d="M709.5 388.1L708.8 388.1L699.1 313.5L699.8 313.5Z" fill="#a480c9" stroke="#a480c9" stroke-width="0.6" />
<path d="M715.0 387.3L714.4 387.5L704.8 312.9L705.5 312.7Z" fill="#a480c9" stroke="#a480c9" stroke-width="0.6" />
<path d="M710.2 388.0L709.5 388.1L699.8 313.5L700.5 313.5Z" fill="#a480c9" stroke="#a480c9" stroke-width="0.6" />
<path d="M714.4 387.5L713.7 387.6L704.1 313.0L704.8 312.9Z" fill="#a480c9" stroke="#a480c9" stroke-width="0.6" />
<path d="M710.9 388.0L710.2 388.0L700.5 313.5L701.2 313.4Z" fill="#a481c9" stroke="#a481c9" stroke-width="0.6" />
<path d="M713.7 387.6L713.0 387.7L703.4 313.1L704.1 313.0Z" fill="#a481ca" stroke="#a481ca" stroke-width="0.6" />
<path d="M711.6 387.9L710.9 388.0L701.2 313.4L702.0 313.3Z" fill="#a481ca" stroke="#a481ca" stroke-width="0.6" />
<path d="M713.0 387.7L712.3 387.8L702.7 313.3L703.4 313.1Z" fill="#a481ca" stroke="#a481ca" stroke-width="0.6" />
<path d="M712.3 387.8L711.6 387.9L702.0 313.3L702.7 313.3Z" fill="#a481ca" stroke="#a481ca" stroke-width="0.6" />
<path d="M906.0 499.6L906.1 502.7L904.6 429.4L904.5 426.2Z" fill="#40325a" stroke="#40325a" stroke-width="0.6" />
<path d="M906.1 502.7L906.0 505.9L904.5 432.5L904.6 429.4Z" fill="#44365e" stroke="#44365e" stroke-width="0.6" />
<path d="M906.0 505.9L905.8 509.0L904.2 435.7L904.5 432.5Z" fill="#483962" stroke="#483962" stroke-width="0.6" />
<path d="M905.8 509.0L905.4 512.2L903.9 438.9L904.2 435.7Z" fill="#4c3d66" stroke="#4c3d66" stroke-width="0.6" />
<path d="M905.4 512.2L904.9 515.3L903.3 442.1L903.9 438.9Z" fill="#51406a" stroke="#51406a" stroke-width="0.6" />
<path d="M904.9 515.3L904.3 518.4L902.7 445.3L903.3 442.1Z" fill="#55446e" stroke="#55446e" stroke-width="0.6" />
<path d="M904.3 518.4L903.5 521.5L901.9 448.5L902.7 445.3Z" fill="#594772" stroke="#594772" stroke-width="0.6" />
<path d="M903.5 521.5L902.6 524.6L900.9 451.6L901.9 448.5Z" fill="#5d4a76" stroke="#5d4a76" stroke-width="0.6" />
<path d="M902.6 524.6L901.5 527.7L899.8 454.7L900.9 451.6Z" fill="#614e7a" stroke="#614e7a" stroke-width="0.6" />
<path d="M901.5 527.7L900.4 530.8L898.6 457.8L899.8 454.7Z" fill="#65517e" stroke="#65517e" stroke-width="0.6" />
<path d="M900.4 530.8L899.0 533.8L897.2 460.9L898.6 457.8Z" fill="#685482" stroke="#685482" stroke-width="0.6" />
<path d="M899.0 533.8L897.6 536.8L895.7 463.9L897.2 460.9Z" fill="#6c5885" stroke="#6c5885" stroke-width="0.6" />
<path d="M897.6 536.8L896.0 539.7L894.0 466.9L895.7 463.9Z" fill="#705b89" stroke="#705b89" stroke-width="0.6" />
<path d="M896.0 539.7L894.3 542.6L892.2 469.8L894.0 466.9Z" fill="#745e8d" stroke="#745e8d" stroke-width="0.6" />
<path d="M399.6 655.9L398.2 652.5L372.7 581.7L374.2 585.2Z" fill="#44355e" stroke="#44355e" stroke-width="0.6" />
<path d="M401.2 659.3L399.6 655.9L374.2 585.2L375.8 588.7Z" fill="#483962" stroke="#483962" stroke-width="0.6" />
<path d="M402.9 662.6L401.2 659.3L375.8 588.7L377.6 592.0Z" fill="#4c3c66" stroke="#4c3c66" stroke-width="0.6" />
<path d="M404.8 665.8L402.9 662.6L377.6 592.0L379.5 595.3Z" fill="#503f6a" stroke="#503f6a" stroke-width="0.6" />
<path d="M406.8 669.0L404.8 665.8L379.5 595.3L381.6 598.5Z" fill="#54436d" stroke="#54436d" stroke-width="0.6" />
<path d="M409.0 672.1L406.8 669.0L381.6 598.5L383.8 601.7Z" fill="#584671" stroke="#584671" stroke-width="0.6" />
<path d="M411.3 675.1L409.0 672.1L383.8 601.7L386.2 604.7Z" fill="#5c4975" stroke="#5c4975" stroke-width="0.6" />
<path d="M413.8 678.0L411.3 675.1L386.2 604.7L388.8 607.7Z" fill="#5f4d79" stroke="#5f4d79" stroke-width="0.6" />
<path d="M416.4 680.8L413.8 678.0L388.8 607.7L391.5 610.6Z" fill="#63507c" stroke="#63507c" stroke-width="0.6" />
<path d="M419.2 683.5L416.4 680.8L391.5 610.6L394.4 613.4Z" fill="#675380" stroke="#675380" stroke-width="0.6" />
<path d="M422.1 686.1L419.2 683.5L394.4 613.4L397.3 616.0Z" fill="#6a5684" stroke="#6a5684" stroke-width="0.6" />
<path d="M425.1 688.7L422.1 686.1L397.3 616.0L400.5 618.6Z" fill="#6e5987" stroke="#6e5987" stroke-width="0.6" />
<path d="M428.2 691.1L425.1 688.7L400.5 618.6L403.7 621.1Z" fill="#715c8b" stroke="#715c8b" stroke-width="0.6" />
<path d="M431.5 693.4L428.2 691.1L403.7 621.1L407.1 623.4Z" fill="#755f8e" stroke="#755f8e" stroke-width="0.6" />
<path d="M434.8 695.5L431.5 693.4L407.1 623.4L410.7 625.6Z" fill="#786191" stroke="#786191" stroke-width="0.6" />
<path d="M438.3 697.6L434.8 695.5L410.7 625.6L414.3 627.7Z" fill="#7a6294" stroke="#7a6294" stroke-width="0.6" />
<path d="M441.9 699.5L438.3 697.6L414.3 627.7L418.0 629.7Z" fill="#7c6497" stroke="#7c6497" stroke-width="0.6" />
<path d="M894.3 542.6L775.5 733.9L767.5 664.7L892.2 469.8Z" fill="#776090" stroke="#776090" stroke-width="0.6" />
<path d="M602.8 781.9L441.9 699.5L418.0 629.7L586.1 713.8Z" fill="#7e6599" stroke="#7e6599" stroke-width="0.6" />
<path d="M775.5 733.9L773.2 737.6L765.0 668.4L767.5 664.7Z" fill="#786292" stroke="#786292" stroke-width="0.6" />
<path d="M773.2 737.6L770.7 741.1L762.4 672.1L765.0 668.4Z" fill="#7a6395" stroke="#7a6395" stroke-width="0.6" />
<path d="M770.7 741.1L768.0 744.6L759.6 675.6L762.4 672.1Z" fill="#7c6497" stroke="#7c6497" stroke-width="0.6" />
<path d="M768.0 744.6L765.3 748.0L756.7 679.1L759.6 675.6Z" fill="#7e6599" stroke="#7e6599" stroke-width="0.6" />
<path d="M606.7 783.8L602.8 781.9L586.1 713.8L590.2 715.8Z" fill="#80669b" stroke="#80669b" stroke-width="0.6" />
<path d="M765.3 748.0L762.4 751.3L753.7 682.5L756.7 679.1Z" fill="#80669c" stroke="#80669c" stroke-width="0.6" />
<path d="M610.7 785.6L606.7 783.8L590.2 715.8L594.4 717.6Z" fill="#82679e" stroke="#82679e" stroke-width="0.6" />
<path d="M762.4 751.3L759.3 754.5L750.5 685.8L753.7 682.5Z" fill="#82689e" stroke="#82689e" stroke-width="0.6" />
<path d="M614.8 787.2L610.7 785.6L594.4 717.6L598.7 719.3Z" fill="#8368a0" stroke="#8368a0" stroke-width="0.6" />
<path d="M759.3 754.5L756.2 757.7L747.1 689.0L750.5 685.8Z" fill="#8469a0" stroke="#8469a0" stroke-width="0.6" />
<path d="M619.0 788.7L614.8 787.2L598.7 719.3L603.1 720.8Z" fill="#856aa2" stroke="#856aa2" stroke-width="0.6" />
<path d="M756.2 757.7L752.9 760.7L743.7 692.1L747.1 689.0Z" fill="#856aa2" stroke="#856aa2" stroke-width="0.6" />
<path d="M623.3 790.1L619.0 788.7L603.1 720.8L607.6 722.2Z" fill="#866ba4" stroke="#866ba4" stroke-width="0.6" />
<path d="M752.9 760.7L749.4 763.7L740.1 695.1L743.7 692.1Z" fill="#876ba4" stroke="#876ba4" stroke-width="0.6" />
<path d="M627.6 791.3L623.3 790.1L607.6 722.2L612.1 723.5Z" fill="#886ca6" stroke="#886ca6" stroke-width="0.6" />
<path d="M749.4 763.7L745.9 766.5L736.3 698.0L740.1 695.1Z" fill="#886ca6" stroke="#886ca6" stroke-width="0.6" />
<path d="M632.0 792.4L627.6 791.3L612.1 723.5L616.7 724.5Z" fill="#896ca8" stroke="#896ca8" stroke-width="0.6" />
<path d="M745.9 766.5L742.3 769.2L732.5 700.8L736.3 698.0Z" fill="#896da8" stroke="#896da8" stroke-width="0.6" />
<path d="M636.5 793.3L632.0 792.4L616.7 724.5L621.4 725.5Z" fill="#8a6da9" stroke="#8a6da9" stroke-width="0.6" />
<path d="M742.3 769.2L738.5 771.8L728.6 703.5L732.5 700.8Z" fill="#8b6daa" stroke="#8b6daa" stroke-width="0.6" />
<path d="M641.0 794.0L636.5 793.3L621.4 725.5L626.1 726.2Z" fill="#8c6eab" stroke="#8c6eab" stroke-width="0.6" />
<path d="M738.5 771.8L734.7 774.3L724.5 706.0L728.6 703.5Z" fill="#8c6eab" stroke="#8c6eab" stroke-width="0.6" />
<path d="M645.5 794.6L641.0 794.0L626.1 726.2L630.9 726.8Z" fill="#8d6fac" stroke="#8d6fac" stroke-width="0.6" />
<path d="M734.7 774.3L730.7 776.7L720.3 708.5L724.5 706.0Z" fill="#8d6fad" stroke="#8d6fad" stroke-width="0.6" />
<path d="M650.1 795.0L645.5 794.6L630.9 726.8L635.7 727.3Z" fill="#8e6fae" stroke="#8e6fae" stroke-width="0.6" />
<path d="M730.7 776.7L726.7 778.9L716.1 710.8L720.3 708.5Z" fill="#8e6fae" stroke="#8e6fae" stroke-width="0.6" />
<path d="M654.7 795.3L650.1 795.0L635.7 727.3L640.5 727.6Z" fill="#8e70af" stroke="#8e70af" stroke-width="0.6" />
<path d="M726.7 778.9L722.5 781.0L711.8 712.9L716.1 710.8Z" fill="#8f70af" stroke="#8f70af" stroke-width="0.6" />
<path d="M659.3 795.4L654.7 795.3L640.5 727.6L645.4 727.7Z" fill="#8f70b0" stroke="#8f70b0" stroke-width="0.6" />
<path d="M722.5 781.0L718.3 783.0L707.3 714.9L711.8 712.9Z" fill="#8f71b0" stroke="#8f71b0" stroke-width="0.6" />
<path d="M664.0 795.4L659.3 795.4L645.4 727.7L650.2 727.6Z" fill="#9071b1" stroke="#9071b1" stroke-width="0.6" />
<path d="M718.3 783.0L714.0 784.9L702.8 716.8L707.3 714.9Z" fill="#9071b1" stroke="#9071b1" stroke-width="0.6" />
<path d="M668.6 795.2L664.0 795.4L650.2 727.6L655.1 727.4Z" fill="#9171b2" stroke="#9171b2" stroke-width="0.6" />
<path d="M714.0 784.9L709.7 786.6L698.3 718.6L702.8 716.8Z" fill="#9171b2" stroke="#9171b2" stroke-width="0.6" />
<path d="M673.3 794.9L668.6 795.2L655.1 727.4L660.0 727.1Z" fill="#9172b2" stroke="#9172b2" stroke-width="0.6" />
<path d="M709.7 786.6L705.3 788.1L693.6 720.2L698.3 718.6Z" fill="#9172b2" stroke="#9172b2" stroke-width="0.6" />
<path d="M677.9 794.4L673.3 794.9L660.0 727.1L664.9 726.6Z" fill="#9272b3" stroke="#9272b3" stroke-width="0.6" />
<path d="M705.3 788.1L700.8 789.5L688.9 721.6L693.6 720.2Z" fill="#9272b3" stroke="#9272b3" stroke-width="0.6" />
<path d="M682.6 793.7L677.9 794.4L664.9 726.6L669.8 725.9Z" fill="#9272b3" stroke="#9272b3" stroke-width="0.6" />
<path d="M700.8 789.5L696.3 790.8L684.2 722.9L688.9 721.6Z" fill="#9273b3" stroke="#9273b3" stroke-width="0.6" />
<path d="M687.2 792.9L682.6 793.7L669.8 725.9L674.6 725.1Z" fill="#9273b3" stroke="#9273b3" stroke-width="0.6" />
<path d="M696.3 790.8L691.8 791.9L679.4 724.1L684.2 722.9Z" fill="#9273b3" stroke="#9273b3" stroke-width="0.6" />
<path d="M691.8 791.9L687.2 792.9L674.6 725.1L679.4 724.1Z" fill="#9273b3" stroke="#9273b3" stroke-width="0.6" />
<path d="M642.0 238.5L642.4 238.0L642.8 237.6L643.2 237.1L643.6 236.7L644.1 236.3L644.6 235.9L645.1 235.5L645.6 235.1L646.2 234.8L646.7 234.4L647.3 234.1L647.9 233.8L648.5 233.4L649.1 233.2L649.7 232.9L650.3 232.6L651.0 232.4L651.6 232.2L652.3 232.0L652.9 231.8L653.6 231.6L654.3 231.4L655.0 231.3L655.7 231.2L656.4 231.1L657.1 231.0L657.8 230.9L658.5 230.9L659.2 230.9L659.9 230.9L660.6 230.9L661.3 230.9L662.0 231.0L662.6 231.0L663.3 231.1L664.0 231.2L664.7 231.4L665.3 231.5L666.0 231.7L666.6 231.8L667.2 232.0L667.8 232.2L668.4 232.5L731.7 258.0L732.3 258.2L732.9 258.5L733.4 258.8L734.0 259.1L734.5 259.4L735.1 259.7L735.6 260.1L736.0 260.4L736.5 260.8L737.0 261.2L737.4 261.6L737.8 262.0L738.2 262.4L738.6 262.9L738.9 263.3L739.2 263.8L739.5 264.3L739.8 264.7L740.1 265.2L740.3 265.7L740.5 266.2L740.7 266.7L740.8 267.3L740.9 267.8L741.1 268.3L741.1 268.8L741.2 269.4L741.2 269.9L741.2 270.4L741.2 271.0L741.1 271.5L741.0 272.0L740.9 272.6L740.8 273.1L740.6 273.6L740.5 274.1L740.3 274.7L740.0 275.2L739.8 275.7L739.5 276.2L739.2 276.7L738.9 277.2L738.5 277.7L717.4 305.4L717.0 305.9L716.6 306.3L716.2 306.8L715.7 307.2L715.3 307.7L714.8 308.1L714.3 308.5L713.7 308.9L713.2 309.3L712.6 309.7L712.0 310.1L711.5 310.4L710.8 310.7L710.2 311.0L709.6 311.3L708.9 311.6L708.3 311.9L707.6 312.1L706.9 312.3L706.2 312.5L705.5 312.7L704.8 312.9L704.1 313.0L703.4 313.1L702.7 313.3L702.0 313.3L701.2 313.4L700.5 313.5L699.8 313.5L699.1 313.5L698.3 313.5L697.6 313.4L696.9 313.4L696.2 313.3L695.5 313.2L694.8 313.1L694.1 313.0L693.4 312.8L692.8 312.6L692.1 312.4L691.4 312.2L690.8 312.0L690.2 311.8L626.0 285.0L625.4 284.8L624.8 284.5L624.2 284.2L623.7 283.9L623.1 283.6L622.6 283.2L622.1 282.9L621.6 282.5L621.2 282.1L620.8 281.7L620.3 281.3L620.0 280.9L619.6 280.4L619.2 280.0L618.9 279.5L618.6 279.1L618.3 278.6L618.1 278.1L617.9 277.6L617.7 277.1L617.5 276.6L617.3 276.1L617.2 275.6L617.1 275.1L617.0 274.5L617.0 274.0L617.0 273.5L617.0 272.9L617.0 272.4L617.1 271.9L617.1 271.3L617.3 270.8L617.4 270.3L617.5 269.7L617.7 269.2L617.9 268.7L618.2 268.2L618.4 267.7L618.7 267.2L619.0 266.7L619.4 266.2L619.7 265.7L620.1 265.2Z" fill="url(#gTop)"/>
<path d="M529.5 323.3L531.9 320.5L534.4 317.8L537.1 315.1L539.8 312.5L542.7 310.0L545.7 307.6L548.7 305.2L551.9 302.9L555.1 300.7L558.5 298.6L561.9 296.6L565.4 294.7L568.9 292.9L572.5 291.1L576.2 289.5L580.0 287.9L583.8 286.5L587.6 285.2L591.5 283.9L595.5 282.8L599.4 281.8L603.4 280.8L607.4 280.0L611.5 279.3L615.5 278.8L619.6 278.3L623.7 277.9L627.8 277.6L631.8 277.5L635.9 277.5L639.9 277.6L644.0 277.7L648.0 278.0L652.0 278.5L655.9 279.0L659.8 279.6L663.7 280.4L667.5 281.2L671.3 282.2L675.0 283.3L678.6 284.4L682.2 285.7L685.7 287.1L847.8 353.8L851.1 355.2L854.4 356.8L857.6 358.4L860.7 360.1L863.8 361.9L866.8 363.9L869.6 365.8L872.4 367.9L875.1 370.1L877.7 372.3L880.2 374.6L882.6 377.0L884.9 379.5L887.1 382.0L889.1 384.6L891.1 387.3L892.9 390.0L894.6 392.8L896.1 395.6L897.6 398.5L898.9 401.5L900.1 404.4L901.1 407.5L902.0 410.5L902.8 413.6L903.4 416.7L903.9 419.8L904.3 423.0L904.5 426.2L904.6 429.4L904.5 432.5L904.2 435.7L903.9 438.9L903.3 442.1L902.7 445.3L901.9 448.5L900.9 451.6L899.8 454.7L898.6 457.8L897.2 460.9L895.7 463.9L894.0 466.9L892.2 469.8L767.5 664.7L765.0 668.4L762.4 672.1L759.6 675.6L756.7 679.1L753.7 682.5L750.5 685.8L747.1 689.0L743.7 692.1L740.1 695.1L736.3 698.0L732.5 700.8L728.6 703.5L724.5 706.0L720.3 708.5L716.1 710.8L711.8 712.9L707.3 714.9L702.8 716.8L698.3 718.6L693.6 720.2L688.9 721.6L684.2 722.9L679.4 724.1L674.6 725.1L669.8 725.9L664.9 726.6L660.0 727.1L655.1 727.4L650.2 727.6L645.4 727.7L640.5 727.6L635.7 727.3L630.9 726.8L626.1 726.2L621.4 725.5L616.7 724.5L612.1 723.5L607.6 722.2L603.1 720.8L598.7 719.3L594.4 717.6L590.2 715.8L586.1 713.8L418.0 629.7L414.3 627.7L410.7 625.6L407.1 623.4L403.7 621.1L400.5 618.6L397.3 616.0L394.4 613.4L391.5 610.6L388.8 607.7L386.2 604.7L383.8 601.7L381.6 598.5L379.5 595.3L377.6 592.0L375.8 588.7L374.2 585.2L372.7 581.7L371.5 578.2L370.4 574.6L369.4 570.9L368.6 567.3L368.0 563.5L367.6 559.8L367.3 556.0L367.3 552.2L367.3 548.4L367.6 544.6L368.0 540.8L368.6 537.0L369.3 533.2L370.2 529.4L371.3 525.7L372.5 521.9L373.9 518.2L375.4 514.5L377.1 510.9L378.9 507.3L380.9 503.7L383.0 500.2L385.2 496.7L387.6 493.3L390.1 490.0L392.8 486.7Z" fill="url(#gTop)"/>
<g clip-path="url(#cpRec)"><path d="M652.6 258.1L652.8 257.8L653.1 257.5L653.3 257.2L653.6 257.0L653.9 256.7L654.2 256.5L654.5 256.3L654.8 256.0L655.1 255.8L655.4 255.6L655.8 255.4L656.1 255.2L656.5 255.0L656.8 254.8L657.2 254.7L657.6 254.5L658.0 254.4L658.4 254.2L658.8 254.1L659.2 254.0L659.6 253.9L660.0 253.8L660.4 253.7L660.8 253.6L661.2 253.6L661.7 253.5L662.1 253.5L662.5 253.5L662.9 253.5L663.3 253.4L663.8 253.5L664.2 253.5L664.6 253.5L665.0 253.5L665.4 253.6L665.8 253.7L666.2 253.7L666.6 253.8L667.0 253.9L667.4 254.0L667.8 254.2L668.1 254.3L668.5 254.4L721.2 275.9L721.6 276.0L721.9 276.2L722.3 276.4L722.6 276.6L722.9 276.8L723.3 277.0L723.6 277.2L723.9 277.4L724.1 277.6L724.4 277.9L724.7 278.1L724.9 278.3L725.1 278.6L725.4 278.9L725.6 279.1L725.8 279.4L725.9 279.7L726.1 280.0L726.2 280.3L726.4 280.6L726.5 280.9L726.6 281.2L726.7 281.5L726.8 281.8L726.8 282.1L726.9 282.5L726.9 282.8L726.9 283.1L726.9 283.4L726.9 283.7L726.9 284.1L726.8 284.4L726.7 284.7L726.7 285.0L726.6 285.3L726.5 285.7L726.3 286.0L726.2 286.3L726.0 286.6L725.9 286.9L725.7 287.2L725.5 287.5L725.3 287.8L686.5 338.5L686.3 338.8L686.0 339.1L685.8 339.4L685.5 339.7L685.2 339.9L684.9 340.2L684.6 340.5L684.3 340.7L683.9 340.9L683.6 341.2L683.2 341.4L682.9 341.6L682.5 341.8L682.1 342.0L681.7 342.2L681.3 342.3L680.9 342.5L680.5 342.6L680.1 342.8L679.7 342.9L679.3 343.0L678.9 343.1L678.4 343.2L678.0 343.3L677.6 343.3L677.1 343.4L676.7 343.4L676.3 343.5L675.8 343.5L675.4 343.5L674.9 343.5L674.5 343.5L674.1 343.4L673.6 343.4L673.2 343.3L672.8 343.2L672.4 343.2L672.0 343.1L671.6 343.0L671.2 342.8L670.8 342.7L670.4 342.6L670.0 342.4L616.3 319.7L615.9 319.5L615.6 319.3L615.2 319.2L614.9 319.0L614.6 318.8L614.3 318.6L614.0 318.3L613.7 318.1L613.4 317.9L613.1 317.6L612.9 317.4L612.7 317.1L612.4 316.9L612.2 316.6L612.0 316.3L611.8 316.0L611.7 315.7L611.5 315.4L611.4 315.1L611.3 314.8L611.2 314.5L611.1 314.2L611.0 313.9L610.9 313.5L610.9 313.2L610.9 312.9L610.9 312.6L610.9 312.2L610.9 311.9L610.9 311.6L611.0 311.2L611.0 310.9L611.1 310.6L611.2 310.3L611.3 309.9L611.5 309.6L611.6 309.3L611.8 309.0L611.9 308.7L612.1 308.4L612.3 308.0L612.5 307.7L612.8 307.5Z" fill="url(#gTop)"/><path d="M660.8 253.6L661.2 253.6L660.2 246.3L659.8 246.3Z" fill="#ac83d1" stroke="#ac83d1" stroke-width="0.6" />
<path d="M661.2 253.6L661.7 253.5L660.6 246.2L660.2 246.3Z" fill="#ac83d1" stroke="#ac83d1" stroke-width="0.6" />
<path d="M660.4 253.7L660.8 253.6L659.8 246.3L659.3 246.4Z" fill="#ac83d1" stroke="#ac83d1" stroke-width="0.6" />
<path d="M661.7 253.5L662.1 253.5L661.0 246.2L660.6 246.2Z" fill="#ac83d1" stroke="#ac83d1" stroke-width="0.6" />
<path d="M660.0 253.8L660.4 253.7L659.3 246.4L658.9 246.5Z" fill="#ac83d0" stroke="#ac83d0" stroke-width="0.6" />
<path d="M662.1 253.5L662.5 253.5L661.4 246.2L661.0 246.2Z" fill="#ab83d0" stroke="#ab83d0" stroke-width="0.6" />
<path d="M659.6 253.9L660.0 253.8L658.9 246.5L658.5 246.6Z" fill="#ab83d0" stroke="#ab83d0" stroke-width="0.6" />
<path d="M662.5 253.5L662.9 253.5L661.9 246.1L661.4 246.2Z" fill="#aa83d0" stroke="#aa83d0" stroke-width="0.6" />
<path d="M659.2 254.0L659.6 253.9L658.5 246.6L658.1 246.7Z" fill="#aa83cf" stroke="#aa83cf" stroke-width="0.6" />
<path d="M662.9 253.5L663.3 253.4L662.3 246.1L661.9 246.1Z" fill="#a983cf" stroke="#a983cf" stroke-width="0.6" />
<path d="M658.8 254.1L659.2 254.0L658.1 246.7L657.7 246.8Z" fill="#a983ce" stroke="#a983ce" stroke-width="0.6" />
<path d="M663.3 253.4L663.8 253.5L662.7 246.2L662.3 246.1Z" fill="#a882ce" stroke="#a882ce" stroke-width="0.6" />
<path d="M658.4 254.2L658.8 254.1L657.7 246.8L657.3 246.9Z" fill="#a782cd" stroke="#a782cd" stroke-width="0.6" />
<path d="M663.8 253.5L664.2 253.5L663.1 246.2L662.7 246.2Z" fill="#a782cc" stroke="#a782cc" stroke-width="0.6" />
<path d="M658.0 254.4L658.4 254.2L657.3 246.9L656.9 247.1Z" fill="#a682cc" stroke="#a682cc" stroke-width="0.6" />
<path d="M664.2 253.5L664.6 253.5L663.5 246.2L663.1 246.2Z" fill="#a682cb" stroke="#a682cb" stroke-width="0.6" />
<path d="M657.6 254.5L658.0 254.4L656.9 247.1L656.5 247.2Z" fill="#a581cb" stroke="#a581cb" stroke-width="0.6" />
<path d="M664.6 253.5L665.0 253.5L664.0 246.2L663.5 246.2Z" fill="#a581cb" stroke="#a581cb" stroke-width="0.6" />
<path d="M657.2 254.7L657.6 254.5L656.5 247.2L656.1 247.4Z" fill="#a581ca" stroke="#a581ca" stroke-width="0.6" />
<path d="M665.0 253.5L665.4 253.6L664.4 246.3L664.0 246.2Z" fill="#a481ca" stroke="#a481ca" stroke-width="0.6" />
<path d="M656.8 254.8L657.2 254.7L656.1 247.4L655.8 247.5Z" fill="#a480c9" stroke="#a480c9" stroke-width="0.6" />
<path d="M665.4 253.6L665.8 253.7L664.8 246.4L664.4 246.3Z" fill="#a380c8" stroke="#a380c8" stroke-width="0.6" />
<path d="M656.5 255.0L656.8 254.8L655.8 247.5L655.4 247.7Z" fill="#a380c8" stroke="#a380c8" stroke-width="0.6" />
<path d="M665.8 253.7L666.2 253.7L665.2 246.4L664.8 246.4Z" fill="#a27fc7" stroke="#a27fc7" stroke-width="0.6" />
<path d="M656.1 255.2L656.5 255.0L655.4 247.7L655.0 247.9Z" fill="#a27fc7" stroke="#a27fc7" stroke-width="0.6" />
<path d="M666.2 253.7L666.6 253.8L665.6 246.5L665.2 246.4Z" fill="#a17fc6" stroke="#a17fc6" stroke-width="0.6" />
<path d="M655.8 255.4L656.1 255.2L655.0 247.9L654.7 248.1Z" fill="#a17ec5" stroke="#a17ec5" stroke-width="0.6" />
<path d="M666.6 253.8L667.0 253.9L666.0 246.6L665.6 246.5Z" fill="#a07ec5" stroke="#a07ec5" stroke-width="0.6" />
<path d="M655.4 255.6L655.8 255.4L654.7 248.1L654.3 248.3Z" fill="#a07dc4" stroke="#a07dc4" stroke-width="0.6" />
<path d="M667.0 253.9L667.4 254.0L666.3 246.7L666.0 246.6Z" fill="#9f7dc3" stroke="#9f7dc3" stroke-width="0.6" />
<path d="M655.1 255.8L655.4 255.6L654.3 248.3L654.0 248.5Z" fill="#9f7dc2" stroke="#9f7dc2" stroke-width="0.6" />
<path d="M667.4 254.0L667.8 254.2L666.7 246.9L666.3 246.7Z" fill="#9e7cc1" stroke="#9e7cc1" stroke-width="0.6" />
<path d="M654.8 256.0L655.1 255.8L654.0 248.5L653.7 248.7Z" fill="#9d7cc1" stroke="#9d7cc1" stroke-width="0.6" />
<path d="M667.8 254.2L668.1 254.3L667.1 247.0L666.7 246.9Z" fill="#9d7bc0" stroke="#9d7bc0" stroke-width="0.6" />
<path d="M654.5 256.3L654.8 256.0L653.7 248.7L653.4 249.0Z" fill="#9c7bbf" stroke="#9c7bbf" stroke-width="0.6" />
<path d="M668.1 254.3L668.5 254.4L667.5 247.1L667.1 247.0Z" fill="#9c7abe" stroke="#9c7abe" stroke-width="0.6" />
<path d="M654.2 256.5L654.5 256.3L653.4 249.0L653.1 249.2Z" fill="#9b7abd" stroke="#9b7abd" stroke-width="0.6" />
<path d="M653.9 256.7L654.2 256.5L653.1 249.2L652.8 249.4Z" fill="#9978bb" stroke="#9978bb" stroke-width="0.6" />
<path d="M653.6 257.0L653.9 256.7L652.8 249.4L652.5 249.7Z" fill="#9676b8" stroke="#9676b8" stroke-width="0.6" />
<path d="M653.3 257.2L653.6 257.0L652.5 249.7L652.2 249.9Z" fill="#9374b5" stroke="#9374b5" stroke-width="0.6" />
<path d="M653.1 257.5L653.3 257.2L652.2 249.9L652.0 250.2Z" fill="#9071b1" stroke="#9071b1" stroke-width="0.6" />
<path d="M652.8 257.8L653.1 257.5L652.0 250.2L651.7 250.5Z" fill="#8e6fae" stroke="#8e6fae" stroke-width="0.6" />
<path d="M652.6 258.1L652.8 257.8L651.7 250.5L651.5 250.8Z" fill="#8b6eaa" stroke="#8b6eaa" stroke-width="0.6" />
<path d="M668.5 254.4L721.2 275.9L720.4 268.6L667.5 247.1Z" fill="#9b7abd" stroke="#9b7abd" stroke-width="0.6" />
<path d="M612.8 307.5L652.6 258.1L651.5 250.8L611.5 300.2Z" fill="#8a6da9" stroke="#8a6da9" stroke-width="0.6" />
<path d="M721.2 275.9L721.6 276.0L720.7 268.8L720.4 268.6Z" fill="#9b7abd" stroke="#9b7abd" stroke-width="0.6" />
<path d="M721.6 276.0L721.9 276.2L721.1 268.9L720.7 268.8Z" fill="#9978bb" stroke="#9978bb" stroke-width="0.6" />
<path d="M721.9 276.2L722.3 276.4L721.4 269.1L721.1 268.9Z" fill="#9676b8" stroke="#9676b8" stroke-width="0.6" />
<path d="M722.3 276.4L722.6 276.6L721.8 269.3L721.4 269.1Z" fill="#9374b5" stroke="#9374b5" stroke-width="0.6" />
<path d="M722.6 276.6L722.9 276.8L722.1 269.5L721.8 269.3Z" fill="#9171b2" stroke="#9171b2" stroke-width="0.6" />
<path d="M722.9 276.8L723.3 277.0L722.4 269.7L722.1 269.5Z" fill="#8e70ae" stroke="#8e70ae" stroke-width="0.6" />
<path d="M723.3 277.0L723.6 277.2L722.7 269.9L722.4 269.7Z" fill="#8b6eab" stroke="#8b6eab" stroke-width="0.6" />
<path d="M723.6 277.2L723.9 277.4L723.0 270.1L722.7 269.9Z" fill="#896ca7" stroke="#896ca7" stroke-width="0.6" />
<path d="M723.9 277.4L724.1 277.6L723.3 270.3L723.0 270.1Z" fill="#866aa4" stroke="#866aa4" stroke-width="0.6" />
<path d="M724.1 277.6L724.4 277.9L723.6 270.6L723.3 270.3Z" fill="#8369a0" stroke="#8369a0" stroke-width="0.6" />
<path d="M724.4 277.9L724.7 278.1L723.8 270.8L723.6 270.6Z" fill="#81679c" stroke="#81679c" stroke-width="0.6" />
<path d="M724.7 278.1L724.9 278.3L724.1 271.1L723.8 270.8Z" fill="#7e6599" stroke="#7e6599" stroke-width="0.6" />
<path d="M724.9 278.3L725.1 278.6L724.3 271.3L724.1 271.1Z" fill="#7b6395" stroke="#7b6395" stroke-width="0.6" />
<path d="M725.1 278.6L725.4 278.9L724.5 271.6L724.3 271.3Z" fill="#786191" stroke="#786191" stroke-width="0.6" />
<path d="M725.4 278.9L725.6 279.1L724.7 271.9L724.5 271.6Z" fill="#745e8d" stroke="#745e8d" stroke-width="0.6" />
<path d="M725.6 279.1L725.8 279.4L724.9 272.1L724.7 271.9Z" fill="#705b89" stroke="#705b89" stroke-width="0.6" />
<path d="M725.8 279.4L725.9 279.7L725.1 272.4L724.9 272.1Z" fill="#6b5785" stroke="#6b5785" stroke-width="0.6" />
<path d="M725.9 279.7L726.1 280.0L725.3 272.7L725.1 272.4Z" fill="#675380" stroke="#675380" stroke-width="0.6" />
<path d="M726.1 280.0L726.2 280.3L725.4 273.0L725.3 272.7Z" fill="#634f7c" stroke="#634f7c" stroke-width="0.6" />
<path d="M726.2 280.3L726.4 280.6L725.6 273.3L725.4 273.0Z" fill="#5e4c77" stroke="#5e4c77" stroke-width="0.6" />
<path d="M726.4 280.6L726.5 280.9L725.7 273.6L725.6 273.3Z" fill="#594873" stroke="#594873" stroke-width="0.6" />
<path d="M726.5 280.9L726.6 281.2L725.8 273.9L725.7 273.6Z" fill="#55446e" stroke="#55446e" stroke-width="0.6" />
<path d="M726.6 281.2L726.7 281.5L725.9 274.2L725.8 273.9Z" fill="#50406a" stroke="#50406a" stroke-width="0.6" />
<path d="M726.7 281.5L726.8 281.8L725.9 274.5L725.9 274.2Z" fill="#4c3c65" stroke="#4c3c65" stroke-width="0.6" />
<path d="M726.8 281.8L726.8 282.1L726.0 274.9L725.9 274.5Z" fill="#473861" stroke="#473861" stroke-width="0.6" />
<path d="M726.8 282.1L726.9 282.5L726.0 275.2L726.0 274.9Z" fill="#42345c" stroke="#42345c" stroke-width="0.6" />
<path d="M612.5 307.7L612.8 307.5L611.5 300.2L611.2 300.5Z" fill="#896da8" stroke="#896da8" stroke-width="0.6" />
<path d="M612.3 308.0L612.5 307.7L611.2 300.5L611.0 300.8Z" fill="#876ba5" stroke="#876ba5" stroke-width="0.6" />
<path d="M612.1 308.4L612.3 308.0L611.0 300.8L610.8 301.1Z" fill="#8469a1" stroke="#8469a1" stroke-width="0.6" />
<path d="M611.9 308.7L612.1 308.4L610.8 301.1L610.6 301.4Z" fill="#81679d" stroke="#81679d" stroke-width="0.6" />
<path d="M611.8 309.0L611.9 308.7L610.6 301.4L610.5 301.7Z" fill="#7e659a" stroke="#7e659a" stroke-width="0.6" />
<path d="M611.6 309.3L611.8 309.0L610.5 301.7L610.3 302.0Z" fill="#7c6496" stroke="#7c6496" stroke-width="0.6" />
<path d="M611.5 309.6L611.6 309.3L610.3 302.0L610.2 302.3Z" fill="#796292" stroke="#796292" stroke-width="0.6" />
<path d="M611.3 309.9L611.5 309.6L610.2 302.3L610.0 302.7Z" fill="#76608f" stroke="#76608f" stroke-width="0.6" />
<path d="M611.2 310.3L611.3 309.9L610.0 302.7L609.9 303.0Z" fill="#715c8a" stroke="#715c8a" stroke-width="0.6" />
<path d="M611.1 310.6L611.2 310.3L609.9 303.0L609.8 303.3Z" fill="#6d5886" stroke="#6d5886" stroke-width="0.6" />
<path d="M611.0 310.9L611.1 310.6L609.8 303.3L609.7 303.6Z" fill="#695582" stroke="#695582" stroke-width="0.6" />
<path d="M611.0 311.2L611.0 310.9L609.7 303.6L609.7 304.0Z" fill="#64517e" stroke="#64517e" stroke-width="0.6" />
<path d="M610.9 311.6L611.0 311.2L609.7 304.0L609.6 304.3Z" fill="#604d79" stroke="#604d79" stroke-width="0.6" />
<path d="M610.9 311.9L610.9 311.6L609.6 304.3L609.6 304.6Z" fill="#5b4975" stroke="#5b4975" stroke-width="0.6" />
<path d="M610.9 312.2L610.9 311.9L609.6 304.6L609.6 305.0Z" fill="#574570" stroke="#574570" stroke-width="0.6" />
<path d="M610.9 312.6L610.9 312.2L609.6 305.0L609.6 305.3Z" fill="#52416c" stroke="#52416c" stroke-width="0.6" />
<path d="M610.9 312.9L610.9 312.6L609.6 305.3L609.6 305.6Z" fill="#4d3d67" stroke="#4d3d67" stroke-width="0.6" />
<path d="M610.9 313.2L610.9 312.9L609.6 305.6L609.6 306.0Z" fill="#493a63" stroke="#493a63" stroke-width="0.6" />
<path d="M610.9 313.5L610.9 313.2L609.6 306.0L609.6 306.3Z" fill="#44365e" stroke="#44365e" stroke-width="0.6" /></g>
<g clip-path="url(#cpRim)"><path d="M550.3 395.3L552.4 392.8L554.6 390.3L556.9 387.9L559.3 385.6L561.8 383.3L564.4 381.0L567.1 378.9L569.8 376.8L572.7 374.8L575.6 372.9L578.6 371.1L581.7 369.3L584.8 367.7L588.0 366.1L591.2 364.6L594.5 363.2L597.9 361.9L601.2 360.6L604.7 359.5L608.1 358.5L611.6 357.6L615.1 356.7L618.7 356.0L622.3 355.4L625.8 354.8L629.4 354.4L633.0 354.1L636.6 353.8L640.2 353.7L643.8 353.7L647.4 353.7L650.9 353.9L654.4 354.2L658.0 354.6L661.4 355.0L664.9 355.6L668.3 356.3L671.7 357.1L675.0 358.0L678.3 358.9L681.5 360.0L684.7 361.2L687.8 362.4L849.5 431.3L852.4 432.6L855.2 433.9L858.0 435.4L860.8 437.0L863.4 438.6L866.0 440.3L868.5 442.1L871.0 444.0L873.3 445.9L875.6 448.0L877.8 450.1L879.8 452.2L881.8 454.4L883.7 456.7L885.5 459.1L887.2 461.4L888.8 463.9L890.3 466.4L891.6 469.0L892.9 471.5L894.0 474.2L895.0 476.9L895.9 479.6L896.7 482.3L897.4 485.1L897.9 487.9L898.4 490.7L898.7 493.5L898.8 496.3L898.9 499.2L898.8 502.0L898.6 504.9L898.3 507.8L897.8 510.6L897.2 513.4L896.5 516.3L895.7 519.1L894.7 521.9L893.6 524.6L892.4 527.4L891.1 530.1L889.6 532.7L888.1 535.3L770.1 724.1L768.0 727.4L765.7 730.6L763.3 733.8L760.7 736.9L758.1 739.9L755.3 742.9L752.4 745.7L749.4 748.5L746.2 751.2L743.0 753.7L739.7 756.2L736.2 758.6L732.7 760.9L729.1 763.0L725.4 765.1L721.6 767.0L717.8 768.8L713.9 770.4L709.9 772.0L705.9 773.4L701.8 774.7L697.7 775.8L693.5 776.9L689.3 777.7L685.1 778.5L680.9 779.1L676.7 779.5L672.4 779.9L668.2 780.0L663.9 780.1L659.7 779.9L655.5 779.7L651.3 779.3L647.2 778.8L643.0 778.1L639.0 777.3L635.0 776.3L631.0 775.2L627.1 774.0L623.3 772.6L619.5 771.1L615.8 769.5L612.2 767.8L445.6 683.0L442.3 681.3L439.1 679.4L436.0 677.4L433.0 675.3L430.2 673.2L427.4 670.9L424.8 668.5L422.2 666.0L419.9 663.5L417.6 660.8L415.5 658.1L413.5 655.3L411.6 652.4L409.9 649.5L408.3 646.5L406.9 643.4L405.6 640.3L404.4 637.1L403.4 633.9L402.5 630.6L401.8 627.3L401.3 624.0L400.8 620.7L400.6 617.3L400.4 613.9L400.5 610.5L400.6 607.1L400.9 603.7L401.4 600.3L402.0 596.9L402.8 593.5L403.6 590.1L404.7 586.7L405.8 583.4L407.1 580.1L408.6 576.8L410.1 573.5L411.8 570.3L413.6 567.2L415.6 564.1L417.6 561.0L419.8 558.0L422.1 555.0Z" fill="url(#gTop)"/><path d="M618.7 356.0L622.3 355.4L610.3 287.3L606.6 288.0Z" fill="#a682cc" stroke="#a682cc" stroke-width="0.6" />
<path d="M622.3 355.4L625.8 354.8L614.0 286.8L610.3 287.3Z" fill="#a682cc" stroke="#a682cc" stroke-width="0.6" />
<path d="M615.1 356.7L618.7 356.0L606.6 288.0L602.9 288.7Z" fill="#a682cc" stroke="#a682cc" stroke-width="0.6" />
<path d="M625.8 354.8L629.4 354.4L617.7 286.4L614.0 286.8Z" fill="#a682cc" stroke="#a682cc" stroke-width="0.6" />
<path d="M611.6 357.6L615.1 356.7L602.9 288.7L599.2 289.6Z" fill="#a682cc" stroke="#a682cc" stroke-width="0.6" />
<path d="M629.4 354.4L633.0 354.1L621.4 286.0L617.7 286.4Z" fill="#a582cb" stroke="#a582cb" stroke-width="0.6" />
<path d="M608.1 358.5L611.6 357.6L599.2 289.6L595.6 290.5Z" fill="#a582cb" stroke="#a582cb" stroke-width="0.6" />
<path d="M633.0 354.1L636.6 353.8L625.2 285.8L621.4 286.0Z" fill="#a581cb" stroke="#a581cb" stroke-width="0.6" />
<path d="M604.7 359.5L608.1 358.5L595.6 290.5L592.0 291.5Z" fill="#a581cb" stroke="#a581cb" stroke-width="0.6" />
<path d="M636.6 353.8L640.2 353.7L628.9 285.6L625.2 285.8Z" fill="#a581cb" stroke="#a581cb" stroke-width="0.6" />
<path d="M601.2 360.6L604.7 359.5L592.0 291.5L588.4 292.7Z" fill="#a581ca" stroke="#a581ca" stroke-width="0.6" />
<path d="M640.2 353.7L643.8 353.7L632.6 285.6L628.9 285.6Z" fill="#a581ca" stroke="#a581ca" stroke-width="0.6" />
<path d="M597.9 361.9L601.2 360.6L588.4 292.7L584.9 293.9Z" fill="#a481ca" stroke="#a481ca" stroke-width="0.6" />
<path d="M643.8 353.7L647.4 353.7L636.3 285.7L632.6 285.6Z" fill="#a481c9" stroke="#a481c9" stroke-width="0.6" />
<path d="M594.5 363.2L597.9 361.9L584.9 293.9L581.4 295.2Z" fill="#a480c9" stroke="#a480c9" stroke-width="0.6" />
<path d="M647.4 353.7L650.9 353.9L640.0 285.9L636.3 285.7Z" fill="#a480c9" stroke="#a480c9" stroke-width="0.6" />
<path d="M591.2 364.6L594.5 363.2L581.4 295.2L578.0 296.6Z" fill="#a380c9" stroke="#a380c9" stroke-width="0.6" />
<path d="M650.9 353.9L654.4 354.2L643.7 286.1L640.0 285.9Z" fill="#a380c8" stroke="#a380c8" stroke-width="0.6" />
<path d="M588.0 366.1L591.2 364.6L578.0 296.6L574.6 298.1Z" fill="#a380c8" stroke="#a380c8" stroke-width="0.6" />
<path d="M654.4 354.2L658.0 354.6L647.3 286.5L643.7 286.1Z" fill="#a27fc7" stroke="#a27fc7" stroke-width="0.6" />
<path d="M584.8 367.7L588.0 366.1L574.6 298.1L571.3 299.7Z" fill="#a27fc7" stroke="#a27fc7" stroke-width="0.6" />
<path d="M658.0 354.6L661.4 355.0L650.9 287.0L647.3 286.5Z" fill="#a27fc6" stroke="#a27fc6" stroke-width="0.6" />
<path d="M581.7 369.3L584.8 367.7L571.3 299.7L568.0 301.4Z" fill="#a17fc6" stroke="#a17fc6" stroke-width="0.6" />
<path d="M661.4 355.0L664.9 355.6L654.5 287.6L650.9 287.0Z" fill="#a17ec5" stroke="#a17ec5" stroke-width="0.6" />
<path d="M578.6 371.1L581.7 369.3L568.0 301.4L564.9 303.2Z" fill="#a17ec5" stroke="#a17ec5" stroke-width="0.6" />
<path d="M664.9 355.6L668.3 356.3L658.0 288.3L654.5 287.6Z" fill="#a07dc4" stroke="#a07dc4" stroke-width="0.6" />
<path d="M575.6 372.9L578.6 371.1L564.9 303.2L561.7 305.0Z" fill="#a07dc4" stroke="#a07dc4" stroke-width="0.6" />
<path d="M668.3 356.3L671.7 357.1L661.5 289.1L658.0 288.3Z" fill="#9f7dc3" stroke="#9f7dc3" stroke-width="0.6" />
<path d="M572.7 374.8L575.6 372.9L561.7 305.0L558.7 307.0Z" fill="#9f7dc2" stroke="#9f7dc2" stroke-width="0.6" />
<path d="M671.7 357.1L675.0 358.0L665.0 289.9L661.5 289.1Z" fill="#9e7cc1" stroke="#9e7cc1" stroke-width="0.6" />
<path d="M569.8 376.8L572.7 374.8L558.7 307.0L555.7 309.0Z" fill="#9e7cc1" stroke="#9e7cc1" stroke-width="0.6" />
<path d="M675.0 358.0L678.3 358.9L668.4 290.9L665.0 289.9Z" fill="#9d7bc0" stroke="#9d7bc0" stroke-width="0.6" />
<path d="M567.1 378.9L569.8 376.8L555.7 309.0L552.9 311.1Z" fill="#9d7bbf" stroke="#9d7bbf" stroke-width="0.6" />
<path d="M678.3 358.9L681.5 360.0L671.7 292.0L668.4 290.9Z" fill="#9c7abe" stroke="#9c7abe" stroke-width="0.6" />
<path d="M564.4 381.0L567.1 378.9L552.9 311.1L550.1 313.2Z" fill="#9b7abe" stroke="#9b7abe" stroke-width="0.6" />
<path d="M681.5 360.0L684.7 361.2L675.0 293.2L671.7 292.0Z" fill="#9b79bd" stroke="#9b79bd" stroke-width="0.6" />
<path d="M561.8 383.3L564.4 381.0L550.1 313.2L547.3 315.5Z" fill="#9a79bc" stroke="#9a79bc" stroke-width="0.6" />
<path d="M684.7 361.2L687.8 362.4L678.2 294.5L675.0 293.2Z" fill="#9978bb" stroke="#9978bb" stroke-width="0.6" />
<path d="M559.3 385.6L561.8 383.3L547.3 315.5L544.7 317.8Z" fill="#9878ba" stroke="#9878ba" stroke-width="0.6" />
<path d="M556.9 387.9L559.3 385.6L544.7 317.8L542.2 320.2Z" fill="#9676b7" stroke="#9676b7" stroke-width="0.6" />
<path d="M554.6 390.3L556.9 387.9L542.2 320.2L539.8 322.6Z" fill="#9374b5" stroke="#9374b5" stroke-width="0.6" />
<path d="M552.4 392.8L554.6 390.3L539.8 322.6L537.5 325.1Z" fill="#9172b2" stroke="#9172b2" stroke-width="0.6" />
<path d="M550.3 395.3L552.4 392.8L537.5 325.1L535.3 327.7Z" fill="#8e70af" stroke="#8e70af" stroke-width="0.6" />
<path d="M687.8 362.4L849.5 431.3L845.9 363.8L678.2 294.5Z" fill="#9978bb" stroke="#9978bb" stroke-width="0.6" />
<path d="M422.1 555.0L550.3 395.3L535.3 327.7L400.8 489.2Z" fill="#8e70af" stroke="#8e70af" stroke-width="0.6" />
<path d="M849.5 431.3L852.4 432.6L848.9 365.1L845.9 363.8Z" fill="#9979bb" stroke="#9979bb" stroke-width="0.6" />
<path d="M852.4 432.6L855.2 433.9L851.9 366.5L848.9 365.1Z" fill="#9777b9" stroke="#9777b9" stroke-width="0.6" />
<path d="M855.2 433.9L858.0 435.4L854.8 368.0L851.9 366.5Z" fill="#9575b7" stroke="#9575b7" stroke-width="0.6" />
<path d="M858.0 435.4L860.8 437.0L857.7 369.6L854.8 368.0Z" fill="#9373b4" stroke="#9373b4" stroke-width="0.6" />
<path d="M860.8 437.0L863.4 438.6L860.4 371.2L857.7 369.6Z" fill="#9172b2" stroke="#9172b2" stroke-width="0.6" />
<path d="M863.4 438.6L866.0 440.3L863.1 373.0L860.4 371.2Z" fill="#8f70af" stroke="#8f70af" stroke-width="0.6" />
<path d="M866.0 440.3L868.5 442.1L865.7 374.8L863.1 373.0Z" fill="#8d6fac" stroke="#8d6fac" stroke-width="0.6" />
<path d="M868.5 442.1L871.0 444.0L868.3 376.7L865.7 374.8Z" fill="#8a6daa" stroke="#8a6daa" stroke-width="0.6" />
<path d="M871.0 444.0L873.3 445.9L870.7 378.7L868.3 376.7Z" fill="#886ca7" stroke="#886ca7" stroke-width="0.6" />
<path d="M873.3 445.9L875.6 448.0L873.0 380.7L870.7 378.7Z" fill="#866aa3" stroke="#866aa3" stroke-width="0.6" />
<path d="M875.6 448.0L877.8 450.1L875.3 382.8L873.0 380.7Z" fill="#8469a0" stroke="#8469a0" stroke-width="0.6" />
<path d="M877.8 450.1L879.8 452.2L877.5 385.0L875.3 382.8Z" fill="#81679d" stroke="#81679d" stroke-width="0.6" />
<path d="M879.8 452.2L881.8 454.4L879.5 387.2L877.5 385.0Z" fill="#7f659a" stroke="#7f659a" stroke-width="0.6" />
<path d="M881.8 454.4L883.7 456.7L881.5 389.5L879.5 387.2Z" fill="#7c6497" stroke="#7c6497" stroke-width="0.6" />
<path d="M883.7 456.7L885.5 459.1L883.4 391.9L881.5 389.5Z" fill="#7a6293" stroke="#7a6293" stroke-width="0.6" />
<path d="M885.5 459.1L887.2 461.4L885.1 394.3L883.4 391.9Z" fill="#776190" stroke="#776190" stroke-width="0.6" />
<path d="M887.2 461.4L888.8 463.9L886.8 396.8L885.1 394.3Z" fill="#745e8d" stroke="#745e8d" stroke-width="0.6" />
<path d="M888.8 463.9L890.3 466.4L888.3 399.3L886.8 396.8Z" fill="#705b89" stroke="#705b89" stroke-width="0.6" />
<path d="M890.3 466.4L891.6 469.0L889.7 401.9L888.3 399.3Z" fill="#6c5785" stroke="#6c5785" stroke-width="0.6" />
<path d="M891.6 469.0L892.9 471.5L891.0 404.5L889.7 401.9Z" fill="#685481" stroke="#685481" stroke-width="0.6" />
<path d="M419.8 558.0L422.1 555.0L400.8 489.2L398.4 492.2Z" fill="#8f70af" stroke="#8f70af" stroke-width="0.6" />
<path d="M892.9 471.5L894.0 474.2L892.2 407.2L891.0 404.5Z" fill="#64517d" stroke="#64517d" stroke-width="0.6" />
<path d="M417.6 561.0L419.8 558.0L398.4 492.2L396.1 495.3Z" fill="#8d6fad" stroke="#8d6fad" stroke-width="0.6" />
<path d="M894.0 474.2L895.0 476.9L893.2 409.9L892.2 407.2Z" fill="#604d79" stroke="#604d79" stroke-width="0.6" />
<path d="M415.6 564.1L417.6 561.0L396.1 495.3L393.9 498.4Z" fill="#8b6eaa" stroke="#8b6eaa" stroke-width="0.6" />
<path d="M895.0 476.9L895.9 479.6L894.2 412.6L893.2 409.9Z" fill="#5c4a76" stroke="#5c4a76" stroke-width="0.6" />
<path d="M413.6 567.2L415.6 564.1L393.9 498.4L391.9 501.5Z" fill="#896ca7" stroke="#896ca7" stroke-width="0.6" />
<path d="M895.9 479.6L896.7 482.3L895.0 415.4L894.2 412.6Z" fill="#584672" stroke="#584672" stroke-width="0.6" />
<path d="M411.8 570.3L413.6 567.2L391.9 501.5L390.0 504.7Z" fill="#876ba4" stroke="#876ba4" stroke-width="0.6" />
<path d="M410.1 573.5L411.8 570.3L390.0 504.7L388.2 508.0Z" fill="#8469a1" stroke="#8469a1" stroke-width="0.6" />
<path d="M896.7 482.3L897.4 485.1L895.7 418.2L895.0 415.4Z" fill="#54436e" stroke="#54436e" stroke-width="0.6" />
<path d="M408.6 576.8L410.1 573.5L388.2 508.0L386.5 511.3Z" fill="#82689e" stroke="#82689e" stroke-width="0.6" />
<path d="M897.4 485.1L897.9 487.9L896.3 421.0L895.7 418.2Z" fill="#503f69" stroke="#503f69" stroke-width="0.6" />
<path d="M407.1 580.1L408.6 576.8L386.5 511.3L385.0 514.6Z" fill="#80669b" stroke="#80669b" stroke-width="0.6" />
<path d="M897.9 487.9L898.4 490.7L896.7 423.9L896.3 421.0Z" fill="#4c3c65" stroke="#4c3c65" stroke-width="0.6" />
<path d="M405.8 583.4L407.1 580.1L385.0 514.6L383.6 518.0Z" fill="#7d6498" stroke="#7d6498" stroke-width="0.6" />
<path d="M898.4 490.7L898.7 493.5L897.0 426.7L896.7 423.9Z" fill="#483861" stroke="#483861" stroke-width="0.6" />
<path d="M404.7 586.7L405.8 583.4L383.6 518.0L382.4 521.4Z" fill="#7b6395" stroke="#7b6395" stroke-width="0.6" />
<path d="M898.7 493.5L898.8 496.3L897.2 429.6L897.0 426.7Z" fill="#43355d" stroke="#43355d" stroke-width="0.6" />
<path d="M403.6 590.1L404.7 586.7L382.4 521.4L381.3 524.8Z" fill="#786192" stroke="#786192" stroke-width="0.6" />
<path d="M402.8 593.5L403.6 590.1L381.3 524.8L380.3 528.2Z" fill="#76608f" stroke="#76608f" stroke-width="0.6" />
<path d="M402.0 596.9L402.8 593.5L380.3 528.2L379.5 531.7Z" fill="#725d8b" stroke="#725d8b" stroke-width="0.6" />
<path d="M401.4 600.3L402.0 596.9L379.5 531.7L378.9 535.1Z" fill="#6e5987" stroke="#6e5987" stroke-width="0.6" />
<path d="M400.9 603.7L401.4 600.3L378.9 535.1L378.3 538.6Z" fill="#6b5684" stroke="#6b5684" stroke-width="0.6" />
<path d="M400.6 607.1L400.9 603.7L378.3 538.6L378.0 542.1Z" fill="#675380" stroke="#675380" stroke-width="0.6" />
<path d="M400.5 610.5L400.6 607.1L378.0 542.1L377.8 545.5Z" fill="#63507c" stroke="#63507c" stroke-width="0.6" />
<path d="M400.4 613.9L400.5 610.5L377.8 545.5L377.7 549.0Z" fill="#5f4c78" stroke="#5f4c78" stroke-width="0.6" />
<path d="M400.6 617.3L400.4 613.9L377.7 549.0L377.8 552.4Z" fill="#5b4975" stroke="#5b4975" stroke-width="0.6" />
<path d="M400.8 620.7L400.6 617.3L377.8 552.4L378.1 555.9Z" fill="#574671" stroke="#574671" stroke-width="0.6" />
<path d="M401.3 624.0L400.8 620.7L378.1 555.9L378.5 559.3Z" fill="#53426d" stroke="#53426d" stroke-width="0.6" />
<path d="M401.8 627.3L401.3 624.0L378.5 559.3L379.0 562.6Z" fill="#4f3f69" stroke="#4f3f69" stroke-width="0.6" />
<path d="M402.5 630.6L401.8 627.3L379.0 562.6L379.8 566.0Z" fill="#4b3c65" stroke="#4b3c65" stroke-width="0.6" />
<path d="M403.4 633.9L402.5 630.6L379.8 566.0L380.6 569.3Z" fill="#473861" stroke="#473861" stroke-width="0.6" />
<path d="M404.4 637.1L403.4 633.9L380.6 569.3L381.6 572.6Z" fill="#43355d" stroke="#43355d" stroke-width="0.6" /><path d="M623.0 285.9L625.2 285.8L628.9 285.6L632.6 285.6L636.3 285.7L640.0 285.9L643.7 286.1L647.3 286.5L650.9 287.0L654.5 287.6L658.0 288.3L661.5 289.1L665.0 289.9L668.4 290.9L671.7 292.0L675.0 293.2L678.2 294.5L705.2 305.6L706.1 312.9L679.2 301.7L676.0 300.5L672.8 299.3L669.4 298.2L666.1 297.2L662.6 296.3L659.1 295.6L655.6 294.9L652.0 294.3L648.4 293.8L644.8 293.4L641.2 293.1L637.5 293.0L633.8 292.9L630.1 292.9L626.4 293.1L624.3 293.2Z" fill="url(#gTop)" stroke="url(#gTop)" stroke-width="0.5"/><path d="M873.1 498.7L873.1 501.2L870.9 447.6L870.9 445.1Z" fill="#43355d" stroke="#43355d" stroke-width="0.6" />
<path d="M873.1 501.2L873.0 503.8L870.8 450.2L870.9 447.6Z" fill="#473861" stroke="#473861" stroke-width="0.6" />
<path d="M873.0 503.8L872.8 506.3L870.6 452.7L870.8 450.2Z" fill="#4b3c65" stroke="#4b3c65" stroke-width="0.6" />
<path d="M872.8 506.3L872.4 508.8L870.2 455.3L870.6 452.7Z" fill="#503f69" stroke="#503f69" stroke-width="0.6" />
<path d="M872.4 508.8L872.0 511.4L869.8 457.8L870.2 455.3Z" fill="#54436d" stroke="#54436d" stroke-width="0.6" />
<path d="M872.0 511.4L871.5 513.9L869.2 460.4L869.8 457.8Z" fill="#584671" stroke="#584671" stroke-width="0.6" />
<path d="M871.5 513.9L870.8 516.4L868.6 462.9L869.2 460.4Z" fill="#5c4a75" stroke="#5c4a75" stroke-width="0.6" />
<path d="M870.8 516.4L870.0 518.9L867.8 465.4L868.6 462.9Z" fill="#604d79" stroke="#604d79" stroke-width="0.6" />
<path d="M870.0 518.9L869.2 521.3L866.9 467.9L867.8 465.4Z" fill="#63507d" stroke="#63507d" stroke-width="0.6" />
<path d="M869.2 521.3L868.2 523.8L865.8 470.4L866.9 467.9Z" fill="#675381" stroke="#675381" stroke-width="0.6" />
<path d="M868.2 523.8L867.1 526.2L864.7 472.8L865.8 470.4Z" fill="#6b5784" stroke="#6b5784" stroke-width="0.6" />
<path d="M867.1 526.2L865.9 528.6L863.5 475.2L864.7 472.8Z" fill="#6f5a88" stroke="#6f5a88" stroke-width="0.6" />
<path d="M865.9 528.6L864.6 530.9L862.1 477.6L863.5 475.2Z" fill="#725d8c" stroke="#725d8c" stroke-width="0.6" />
<path d="M864.6 530.9L863.2 533.2L860.7 480.0L862.1 477.6Z" fill="#76608f" stroke="#76608f" stroke-width="0.6" />
<path d="M432.2 630.8L431.2 628.3L413.9 576.2L414.9 578.8Z" fill="#43355d" stroke="#43355d" stroke-width="0.6" />
<path d="M433.2 633.2L432.2 630.8L414.9 578.8L415.9 581.3Z" fill="#473861" stroke="#473861" stroke-width="0.6" />
<path d="M434.4 635.7L433.2 633.2L415.9 581.3L417.1 583.8Z" fill="#4b3c65" stroke="#4b3c65" stroke-width="0.6" />
<path d="M435.7 638.1L434.4 635.7L417.1 583.8L418.4 586.2Z" fill="#4f3f69" stroke="#4f3f69" stroke-width="0.6" />
<path d="M437.1 640.4L435.7 638.1L418.4 586.2L419.9 588.6Z" fill="#53426d" stroke="#53426d" stroke-width="0.6" />
<path d="M438.6 642.7L437.1 640.4L419.9 588.6L421.4 590.9Z" fill="#574671" stroke="#574671" stroke-width="0.6" />
<path d="M440.2 644.9L438.6 642.7L421.4 590.9L423.1 593.1Z" fill="#5b4974" stroke="#5b4974" stroke-width="0.6" />
<path d="M441.9 647.1L440.2 644.9L423.1 593.1L424.8 595.3Z" fill="#5f4c78" stroke="#5f4c78" stroke-width="0.6" />
<path d="M443.7 649.1L441.9 647.1L424.8 595.3L426.7 597.4Z" fill="#634f7c" stroke="#634f7c" stroke-width="0.6" />
<path d="M445.7 651.2L443.7 649.1L426.7 597.4L428.7 599.5Z" fill="#665380" stroke="#665380" stroke-width="0.6" />
<path d="M447.7 653.1L445.7 651.2L428.7 599.5L430.7 601.5Z" fill="#6a5683" stroke="#6a5683" stroke-width="0.6" />
<path d="M449.8 655.0L447.7 653.1L430.7 601.5L432.9 603.4Z" fill="#6e5987" stroke="#6e5987" stroke-width="0.6" />
<path d="M452.0 656.8L449.8 655.0L432.9 603.4L435.2 605.2Z" fill="#715c8a" stroke="#715c8a" stroke-width="0.6" />
<path d="M454.3 658.5L452.0 656.8L435.2 605.2L437.5 606.9Z" fill="#755f8e" stroke="#755f8e" stroke-width="0.6" />
<path d="M456.7 660.2L454.3 658.5L437.5 606.9L440.0 608.6Z" fill="#776191" stroke="#776191" stroke-width="0.6" />
<path d="M459.1 661.7L456.7 660.2L440.0 608.6L442.5 610.2Z" fill="#7a6294" stroke="#7a6294" stroke-width="0.6" />
<path d="M461.7 663.2L459.1 661.7L442.5 610.2L445.2 611.7Z" fill="#7c6497" stroke="#7c6497" stroke-width="0.6" />
<path d="M464.3 664.6L461.7 663.2L445.2 611.7L447.9 613.1Z" fill="#7e6599" stroke="#7e6599" stroke-width="0.6" />
<path d="M863.2 533.2L750.3 710.9L743.7 660.0L860.7 480.0Z" fill="#786192" stroke="#786192" stroke-width="0.6" />
<path d="M624.8 745.3L464.3 664.6L447.9 613.1L613.6 695.0Z" fill="#80679c" stroke="#80679c" stroke-width="0.6" />
<path d="M750.3 710.9L748.6 713.5L741.9 662.6L743.7 660.0Z" fill="#7a6394" stroke="#7a6394" stroke-width="0.6" />
<path d="M748.6 713.5L746.8 716.0L740.0 665.2L741.9 662.6Z" fill="#7c6497" stroke="#7c6497" stroke-width="0.6" />
<path d="M746.8 716.0L744.8 718.5L738.0 667.8L740.0 665.2Z" fill="#7e6599" stroke="#7e6599" stroke-width="0.6" />
<path d="M744.8 718.5L742.8 721.0L735.8 670.3L738.0 667.8Z" fill="#80669c" stroke="#80669c" stroke-width="0.6" />
<path d="M742.8 721.0L740.7 723.4L733.6 672.7L735.8 670.3Z" fill="#82689e" stroke="#82689e" stroke-width="0.6" />
<path d="M627.7 746.7L624.8 745.3L613.6 695.0L616.5 696.4Z" fill="#82689e" stroke="#82689e" stroke-width="0.6" />
<path d="M740.7 723.4L738.4 725.7L731.3 675.0L733.6 672.7Z" fill="#8469a0" stroke="#8469a0" stroke-width="0.6" />
<path d="M630.6 748.0L627.7 746.7L616.5 696.4L619.5 697.7Z" fill="#8469a1" stroke="#8469a1" stroke-width="0.6" />
<path d="M738.4 725.7L736.1 728.0L728.9 677.3L731.3 675.0Z" fill="#856aa3" stroke="#856aa3" stroke-width="0.6" />
<path d="M633.6 749.2L630.6 748.0L619.5 697.7L622.6 698.9Z" fill="#856aa3" stroke="#856aa3" stroke-width="0.6" />
<path d="M736.1 728.0L733.7 730.1L726.4 679.6L728.9 677.3Z" fill="#876ba5" stroke="#876ba5" stroke-width="0.6" />
<path d="M636.6 750.2L633.6 749.2L622.6 698.9L625.8 700.0Z" fill="#876ba5" stroke="#876ba5" stroke-width="0.6" />
<path d="M733.7 730.1L731.2 732.3L723.8 681.7L726.4 679.6Z" fill="#886ca7" stroke="#886ca7" stroke-width="0.6" />
<path d="M639.7 751.2L636.6 750.2L625.8 700.0L629.0 701.0Z" fill="#886ca7" stroke="#886ca7" stroke-width="0.6" />
<path d="M731.2 732.3L728.6 734.3L721.1 683.8L723.8 681.7Z" fill="#8a6da9" stroke="#8a6da9" stroke-width="0.6" />
<path d="M642.9 752.1L639.7 751.2L629.0 701.0L632.2 701.9Z" fill="#8a6da9" stroke="#8a6da9" stroke-width="0.6" />
<path d="M728.6 734.3L726.0 736.2L718.4 685.8L721.1 683.8Z" fill="#8b6eaa" stroke="#8b6eaa" stroke-width="0.6" />
<path d="M646.0 752.8L642.9 752.1L632.2 701.9L635.5 702.6Z" fill="#8b6eaa" stroke="#8b6eaa" stroke-width="0.6" />
<path d="M726.0 736.2L723.2 738.1L715.5 687.7L718.4 685.8Z" fill="#8c6eac" stroke="#8c6eac" stroke-width="0.6" />
<path d="M649.3 753.5L646.0 752.8L635.5 702.6L638.9 703.3Z" fill="#8c6fac" stroke="#8c6fac" stroke-width="0.6" />
<path d="M723.2 738.1L720.4 739.9L712.6 689.5L715.5 687.7Z" fill="#8d6fad" stroke="#8d6fad" stroke-width="0.6" />
<path d="M652.5 754.0L649.3 753.5L638.9 703.3L642.3 703.8Z" fill="#8d6fae" stroke="#8d6fae" stroke-width="0.6" />
<path d="M720.4 739.9L717.6 741.6L709.6 691.2L712.6 689.5Z" fill="#8e70af" stroke="#8e70af" stroke-width="0.6" />
<path d="M655.8 754.4L652.5 754.0L642.3 703.8L645.7 704.3Z" fill="#8e70af" stroke="#8e70af" stroke-width="0.6" />
<path d="M717.6 741.6L714.6 743.2L706.6 692.8L709.6 691.2Z" fill="#8f71b0" stroke="#8f71b0" stroke-width="0.6" />
<path d="M659.1 754.7L655.8 754.4L645.7 704.3L649.1 704.6Z" fill="#8f71b0" stroke="#8f71b0" stroke-width="0.6" />
<path d="M714.6 743.2L711.6 744.7L703.5 694.4L706.6 692.8Z" fill="#9071b1" stroke="#9071b1" stroke-width="0.6" />
<path d="M662.5 754.9L659.1 754.7L649.1 704.6L652.5 704.8Z" fill="#9071b1" stroke="#9071b1" stroke-width="0.6" />
<path d="M711.6 744.7L708.6 746.1L700.3 695.8L703.5 694.4Z" fill="#9172b2" stroke="#9172b2" stroke-width="0.6" />
<path d="M665.8 755.0L662.5 754.9L652.5 704.8L656.0 704.9Z" fill="#9172b2" stroke="#9172b2" stroke-width="0.6" />
<path d="M708.6 746.1L705.5 747.5L697.1 697.2L700.3 695.8Z" fill="#9273b3" stroke="#9273b3" stroke-width="0.6" />
<path d="M669.2 755.0L665.8 755.0L656.0 704.9L659.5 704.8Z" fill="#9273b3" stroke="#9273b3" stroke-width="0.6" />
<path d="M705.5 747.5L702.3 748.7L693.8 698.4L697.1 697.2Z" fill="#9373b4" stroke="#9373b4" stroke-width="0.6" />
<path d="M672.6 754.9L669.2 755.0L659.5 704.8L663.0 704.7Z" fill="#9373b4" stroke="#9373b4" stroke-width="0.6" />
<path d="M702.3 748.7L699.1 749.8L690.5 699.5L693.8 698.4Z" fill="#9374b5" stroke="#9374b5" stroke-width="0.6" />
<path d="M675.9 754.6L672.6 754.9L663.0 704.7L666.5 704.4Z" fill="#9374b5" stroke="#9374b5" stroke-width="0.6" />
<path d="M699.1 749.8L695.9 750.8L687.1 700.6L690.5 699.5Z" fill="#9474b5" stroke="#9474b5" stroke-width="0.6" />
<path d="M679.3 754.2L675.9 754.6L666.5 704.4L670.0 704.1Z" fill="#9474b5" stroke="#9474b5" stroke-width="0.6" />
<path d="M695.9 750.8L692.6 751.7L683.8 701.5L687.1 700.6Z" fill="#9474b5" stroke="#9474b5" stroke-width="0.6" />
<path d="M682.6 753.8L679.3 754.2L670.0 704.1L673.4 703.6Z" fill="#9474b5" stroke="#9474b5" stroke-width="0.6" />
<path d="M692.6 751.7L689.3 752.5L680.3 702.3L683.8 701.5Z" fill="#9474b6" stroke="#9474b6" stroke-width="0.6" />
<path d="M686.0 753.2L682.6 753.8L673.4 703.6L676.9 703.0Z" fill="#9474b6" stroke="#9474b6" stroke-width="0.6" />
<path d="M689.3 752.5L686.0 753.2L676.9 703.0L680.3 702.3Z" fill="#9474b6" stroke="#9474b6" stroke-width="0.6" /><path d="M559.1 349.2L560.8 347.2L562.7 345.1L564.6 343.2L566.6 341.3L568.6 339.4L570.8 337.6L573.0 335.9L575.3 334.2L577.6 332.5L580.1 331.0L582.5 329.5L585.1 328.1L587.7 326.7L590.3 325.4L593.0 324.2L595.7 323.0L598.5 322.0L601.3 321.0L604.2 320.1L607.0 319.2L609.9 318.5L612.9 317.8L615.8 317.2L618.8 316.7L621.7 316.2L624.7 315.9L627.7 315.6L630.7 315.4L633.7 315.3L636.6 315.3L639.6 315.3L642.5 315.5L645.5 315.7L648.4 316.0L651.3 316.4L654.1 316.9L657.0 317.4L659.8 318.1L662.5 318.8L665.2 319.6L667.9 320.5L670.5 321.4L673.1 322.4L826.3 386.7L829.0 387.8L831.6 389.1L834.1 390.4L836.6 391.8L839.0 393.3L841.4 394.8L843.7 396.4L845.9 398.1L848.0 399.9L850.1 401.7L852.1 403.6L853.9 405.5L855.7 407.5L857.5 409.5L859.1 411.6L860.6 413.8L862.0 416.0L863.3 418.2L864.6 420.5L865.7 422.9L866.7 425.2L867.6 427.6L868.4 430.0L869.1 432.5L869.7 435.0L870.2 437.5L870.5 440.0L870.8 442.5L870.9 445.1L870.9 447.6L870.8 450.2L870.6 452.7L870.2 455.3L869.8 457.8L869.2 460.4L868.6 462.9L867.8 465.4L866.9 467.9L865.8 470.4L864.7 472.8L863.5 475.2L862.1 477.6L860.7 480.0L743.7 660.0L741.9 662.6L740.0 665.2L738.0 667.8L735.8 670.3L733.6 672.7L731.3 675.0L728.9 677.3L726.4 679.6L723.8 681.7L721.1 683.8L718.4 685.8L715.5 687.7L712.6 689.5L709.6 691.2L706.6 692.8L703.5 694.4L700.3 695.8L697.1 697.2L693.8 698.4L690.5 699.5L687.1 700.6L683.8 701.5L680.3 702.3L676.9 703.0L673.4 703.6L670.0 704.1L666.5 704.4L663.0 704.7L659.5 704.8L656.0 704.9L652.5 704.8L649.1 704.6L645.7 704.3L642.3 703.8L638.9 703.3L635.5 702.6L632.2 701.9L629.0 701.0L625.8 700.0L622.6 698.9L619.5 697.7L616.5 696.4L613.6 695.0L447.9 613.1L445.2 611.7L442.5 610.2L440.0 608.6L437.5 606.9L435.2 605.2L432.9 603.4L430.7 601.5L428.7 599.5L426.7 597.4L424.8 595.3L423.1 593.1L421.4 590.9L419.9 588.6L418.4 586.2L417.1 583.8L415.9 581.3L414.9 578.8L413.9 576.2L413.1 573.7L412.3 571.0L411.7 568.4L411.3 565.7L410.9 563.0L410.7 560.3L410.6 557.5L410.6 554.8L410.7 552.0L410.9 549.3L411.3 546.5L411.8 543.7L412.4 541.0L413.1 538.2L414.0 535.5L414.9 532.8L416.0 530.1L417.2 527.5L418.4 524.8L419.8 522.2L421.3 519.7L422.9 517.1L424.6 514.6L426.4 512.2L428.3 509.8Z" fill="url(#gTop)" stroke="#5f4878" stroke-opacity="0.45" stroke-width="0.9"/><path d="M869.8 458.3L869.3 460.9L868.6 463.4L867.8 465.9L866.9 468.4L865.9 470.9L864.7 473.3L863.5 475.7L862.1 478.1L860.7 480.4L743.7 660.4L741.9 663.1L740.0 665.7L738.0 668.2L735.9 670.7L733.7 673.1L731.4 675.5L729.0 677.8L726.5 680.0L723.9 682.2L721.2 684.2L718.4 686.2L715.6 688.1L712.7 689.9L709.7 691.7L706.7 693.3L703.5 694.8L700.4 696.3L697.2 697.6L693.9 698.8L690.6 700.0L687.2 701.0L683.8 701.9L680.4 702.7L677.0 703.4L673.5 704.0L670.0 704.5L666.6 704.9L663.1 705.1L659.6 705.3L656.1 705.3L652.6 705.2L649.2 705.0L645.7 704.7L642.3 704.3L639.0 703.7L635.6 703.1L632.3 702.3L629.1 701.4L625.9 700.5L622.7 699.4L619.6 698.2L616.6 696.9L613.7 695.5L448.0 613.5L445.3 612.1L442.7 610.6L440.1 609.1L437.7 607.4L435.3 605.6L433.1 603.8L430.9 601.9L428.8 599.9L426.8 597.9L425.0 595.8L423.2 593.6L421.6 591.3" fill="none" stroke="#f2acff" stroke-width="2.4" stroke-opacity="0.9" stroke-linecap="round"/><clipPath id="cpPlat"><path d="M559.1 349.2L560.8 347.2L562.7 345.1L564.6 343.2L566.6 341.3L568.6 339.4L570.8 337.6L573.0 335.9L575.3 334.2L577.6 332.5L580.1 331.0L582.5 329.5L585.1 328.1L587.7 326.7L590.3 325.4L593.0 324.2L595.7 323.0L598.5 322.0L601.3 321.0L604.2 320.1L607.0 319.2L609.9 318.5L612.9 317.8L615.8 317.2L618.8 316.7L621.7 316.2L624.7 315.9L627.7 315.6L630.7 315.4L633.7 315.3L636.6 315.3L639.6 315.3L642.5 315.5L645.5 315.7L648.4 316.0L651.3 316.4L654.1 316.9L657.0 317.4L659.8 318.1L662.5 318.8L665.2 319.6L667.9 320.5L670.5 321.4L673.1 322.4L826.3 386.7L829.0 387.8L831.6 389.1L834.1 390.4L836.6 391.8L839.0 393.3L841.4 394.8L843.7 396.4L845.9 398.1L848.0 399.9L850.1 401.7L852.1 403.6L853.9 405.5L855.7 407.5L857.5 409.5L859.1 411.6L860.6 413.8L862.0 416.0L863.3 418.2L864.6 420.5L865.7 422.9L866.7 425.2L867.6 427.6L868.4 430.0L869.1 432.5L869.7 435.0L870.2 437.5L870.5 440.0L870.8 442.5L870.9 445.1L870.9 447.6L870.8 450.2L870.6 452.7L870.2 455.3L869.8 457.8L869.2 460.4L868.6 462.9L867.8 465.4L866.9 467.9L865.8 470.4L864.7 472.8L863.5 475.2L862.1 477.6L860.7 480.0L743.7 660.0L741.9 662.6L740.0 665.2L738.0 667.8L735.8 670.3L733.6 672.7L731.3 675.0L728.9 677.3L726.4 679.6L723.8 681.7L721.1 683.8L718.4 685.8L715.5 687.7L712.6 689.5L709.6 691.2L706.6 692.8L703.5 694.4L700.3 695.8L697.1 697.2L693.8 698.4L690.5 699.5L687.1 700.6L683.8 701.5L680.3 702.3L676.9 703.0L673.4 703.6L670.0 704.1L666.5 704.4L663.0 704.7L659.5 704.8L656.0 704.9L652.5 704.8L649.1 704.6L645.7 704.3L642.3 703.8L638.9 703.3L635.5 702.6L632.2 701.9L629.0 701.0L625.8 700.0L622.6 698.9L619.5 697.7L616.5 696.4L613.6 695.0L447.9 613.1L445.2 611.7L442.5 610.2L440.0 608.6L437.5 606.9L435.2 605.2L432.9 603.4L430.7 601.5L428.7 599.5L426.7 597.4L424.8 595.3L423.1 593.1L421.4 590.9L419.9 588.6L418.4 586.2L417.1 583.8L415.9 581.3L414.9 578.8L413.9 576.2L413.1 573.7L412.3 571.0L411.7 568.4L411.3 565.7L410.9 563.0L410.7 560.3L410.6 557.5L410.6 554.8L410.7 552.0L410.9 549.3L411.3 546.5L411.8 543.7L412.4 541.0L413.1 538.2L414.0 535.5L414.9 532.8L416.0 530.1L417.2 527.5L418.4 524.8L419.8 522.2L421.3 519.7L422.9 517.1L424.6 514.6L426.4 512.2L428.3 509.8Z"/></clipPath><g clip-path="url(#cpPlat)"><path d="M580.0 467.0L582.3 467.4L585.5 468.3L589.3 469.4L593.3 470.9L597.2 472.5L600.8 474.2L603.7 475.7L605.7 477.0L605.7 477.0L603.3 476.8L599.9 476.3L596.1 475.4L592.0 474.0L588.2 472.3L584.7 470.4L581.9 468.5L580.0 467.0ZM582.9 439.9L584.5 440.2L586.7 440.9L589.3 441.9L591.9 443.1L594.5 444.5L596.9 446.0L598.7 447.3L600.0 448.4L600.0 448.4L598.2 448.4L595.8 448.0L593.2 447.3L590.4 446.1L587.9 444.6L585.7 442.9L584.0 441.3L582.9 439.9ZM591.4 402.8L590.9 404.9L590.3 407.9L589.8 411.6L589.5 415.5L589.4 419.5L589.5 423.2L589.7 426.3L590.0 428.4L590.0 428.4L590.9 426.3L591.7 423.3L592.5 419.7L592.9 415.7L592.9 411.8L592.6 408.1L592.0 405.0L591.4 402.8ZM548.4 434.4L549.4 434.5L550.7 435.0L552.2 435.5L553.8 436.0L555.6 436.3L557.5 436.3L559.5 435.9L561.6 434.9L564.2 433.1L567.4 430.5L570.9 427.4L574.6 424.1L578.3 420.8L581.8 417.8L584.7 415.4L586.9 413.8L586.9 413.8L585.3 416.0L583.0 419.1L580.0 422.6L576.7 426.3L573.2 429.9L569.5 433.1L566.1 435.7L563.0 437.4L560.2 438.3L557.7 438.5L555.4 438.1L553.4 437.4L551.7 436.5L550.4 435.7L549.3 434.9L548.4 434.4ZM518.1 449.5L520.3 449.8L523.3 450.3L526.8 451.0L530.7 451.7L534.6 452.4L538.6 452.8L542.2 452.9L545.3 452.5L548.3 451.5L551.5 449.9L554.7 447.9L557.8 445.7L560.8 443.5L563.5 441.4L565.8 439.7L567.6 438.5L567.6 438.5L566.2 440.1L564.3 442.3L562.0 444.9L559.3 447.6L556.3 450.2L553.1 452.6L549.6 454.6L546.1 455.8L542.3 456.2L538.3 456.0L534.2 455.2L530.1 454.1L526.3 452.8L522.9 451.5L520.1 450.4L518.1 449.5ZM489.2 466.1L491.0 466.2L493.3 466.3L496.0 466.5L499.1 466.8L502.4 467.2L505.9 467.7L509.4 468.3L512.9 469.1L516.6 470.1L520.7 471.3L525.1 472.8L529.5 474.4L533.6 476.0L537.4 477.5L540.5 478.8L542.9 479.8L542.9 479.8L540.3 479.5L537.0 478.8L533.0 477.9L528.6 476.9L524.1 475.7L519.7 474.5L515.6 473.3L512.0 472.3L508.7 471.4L505.3 470.5L502.0 469.7L498.8 468.8L495.8 468.1L493.1 467.3L490.9 466.7L489.2 466.1ZM504.3 466.1L506.7 465.6L509.9 465.1L513.8 464.6L518.0 464.1L522.4 463.6L526.8 463.1L530.9 462.6L534.4 462.2L537.7 461.6L541.0 461.0L544.2 460.4L547.3 459.7L550.2 459.1L552.8 458.5L554.9 458.1L556.6 457.8L556.6 457.8L555.1 458.6L553.0 459.5L550.6 460.6L547.9 461.7L544.8 462.8L541.6 463.8L538.3 464.7L534.9 465.4L531.3 466.0L527.1 466.4L522.7 466.7L518.2 466.7L513.9 466.7L510.0 466.5L506.7 466.3L504.3 466.1ZM591.0 404.1L591.1 405.8L591.1 408.0L591.0 410.6L590.9 413.5L590.8 416.5L590.7 419.5L590.7 422.2L590.8 424.6L591.2 426.9L591.7 429.3L592.3 431.7L593.0 434.0L593.7 436.3L594.4 438.3L594.9 440.0L595.2 441.3L595.2 441.3L594.3 440.2L593.3 438.7L592.2 436.9L591.0 434.8L589.8 432.6L588.8 430.1L588.0 427.6L587.5 425.0L587.3 422.3L587.4 419.3L587.8 416.3L588.3 413.3L589.0 410.4L589.8 407.8L590.4 405.7L591.0 404.1ZM580.0 449.5L580.5 450.1L581.0 450.9L581.6 451.8L582.2 452.9L582.9 453.9L583.6 455.1L584.4 456.1L585.1 457.1L585.9 458.1L586.9 459.3L588.0 460.5L589.2 461.8L590.2 463.1L591.1 464.2L591.9 465.2L592.4 466.1L592.4 466.1L591.4 465.8L590.2 465.2L588.8 464.5L587.4 463.7L585.9 462.7L584.6 461.5L583.4 460.3L582.4 459.1L581.6 457.8L581.0 456.5L580.6 455.1L580.3 453.7L580.1 452.4L580.0 451.3L580.0 450.3L580.0 449.5ZM571.8 466.1L572.3 466.9L572.9 468.0L573.6 469.3L574.3 470.8L575.1 472.4L575.7 473.9L576.4 475.3L576.9 476.5L577.5 477.6L578.1 478.6L578.8 479.7L579.4 480.7L580.1 481.7L580.6 482.6L581.1 483.3L581.4 484.0L581.4 484.0L580.7 483.7L579.9 483.3L578.9 482.7L577.9 482.1L576.8 481.3L575.8 480.4L574.8 479.3L574.0 478.1L573.3 476.7L572.7 475.2L572.2 473.5L571.9 471.7L571.7 470.0L571.6 468.4L571.6 467.1L571.8 466.1ZM581.4 441.3L582.9 441.5L585.0 442.0L587.5 442.7L590.1 443.6L592.6 444.8L594.9 446.0L596.7 447.2L597.9 448.2L597.9 448.2L596.2 448.3L594.0 448.1L591.4 447.6L588.8 446.8L586.3 445.5L584.2 444.0L582.5 442.6L581.4 441.3ZM575.9 464.7L578.6 465.3L582.3 466.5L586.8 468.0L591.5 469.8L596.1 471.8L600.3 473.8L603.8 475.7L606.2 477.1L606.2 477.1L603.3 476.7L599.5 475.9L594.9 474.6L590.2 472.9L585.6 470.8L581.5 468.6L578.1 466.4L575.9 464.7ZM545.6 488.1L545.9 487.5L546.4 486.8L547.0 486.2L547.8 485.6L548.7 485.3L549.6 485.2L550.5 485.2L551.1 485.3L551.1 485.3L551.0 486.2L550.6 487.2L550.1 488.1L549.3 488.7L548.4 488.9L547.4 488.8L546.4 488.5L545.6 488.1ZM584.1 523.9L587.1 522.6L591.0 521.0L595.7 519.1L600.9 517.0L606.4 514.9L612.0 512.8L617.3 510.8L622.3 509.0L627.1 507.2L632.3 505.3L637.5 503.4L642.7 501.6L647.6 499.9L651.9 498.4L655.6 497.2L658.5 496.3L658.5 496.3L655.9 497.8L652.4 499.5L648.2 501.6L643.5 503.8L638.5 506.0L633.4 508.2L628.3 510.3L623.4 512.2L618.5 514.0L613.0 515.8L607.4 517.6L601.7 519.3L596.3 520.9L591.4 522.2L587.3 523.2L584.1 523.9Z" fill="#a57cc8"/>
<path d="M580.0 467.0L581.9 468.5L584.7 470.4L588.2 472.3L592.0 474.0L596.1 475.4L599.9 476.3L603.3 476.8L605.7 477.0M582.9 439.9L584.0 441.3L585.7 442.9L587.9 444.6L590.4 446.1L593.2 447.3L595.8 448.0L598.2 448.4L600.0 448.4M591.4 402.8L592.0 405.0L592.6 408.1L592.9 411.8L592.9 415.7L592.5 419.7L591.7 423.3L590.9 426.3L590.0 428.4M548.4 434.4L549.3 434.9L550.4 435.7L551.7 436.5L553.4 437.4L555.4 438.1L557.7 438.5L560.2 438.3L563.0 437.4L566.1 435.7L569.5 433.1L573.2 429.9L576.7 426.3L580.0 422.6L583.0 419.1L585.3 416.0L586.9 413.8M518.1 449.5L520.1 450.4L522.9 451.5L526.3 452.8L530.1 454.1L534.2 455.2L538.3 456.0L542.3 456.2L546.1 455.8L549.6 454.6L553.1 452.6L556.3 450.2L559.3 447.6L562.0 444.9L564.3 442.3L566.2 440.1L567.6 438.5M489.2 466.1L490.9 466.7L493.1 467.3L495.8 468.1L498.8 468.8L502.0 469.7L505.3 470.5L508.7 471.4L512.0 472.3L515.6 473.3L519.7 474.5L524.1 475.7L528.6 476.9L533.0 477.9L537.0 478.8L540.3 479.5L542.9 479.8M504.3 466.1L506.7 466.3L510.0 466.5L513.9 466.7L518.2 466.7L522.7 466.7L527.1 466.4L531.3 466.0L534.9 465.4L538.3 464.7L541.6 463.8L544.8 462.8L547.9 461.7L550.6 460.6L553.0 459.5L555.1 458.6L556.6 457.8M591.0 404.1L590.4 405.7L589.8 407.8L589.0 410.4L588.3 413.3L587.8 416.3L587.4 419.3L587.3 422.3L587.5 425.0L588.0 427.6L588.8 430.1L589.8 432.6L591.0 434.8L592.2 436.9L593.3 438.7L594.3 440.2L595.2 441.3M580.0 449.5L580.0 450.3L580.0 451.3L580.1 452.4L580.3 453.7L580.6 455.1L581.0 456.5L581.6 457.8L582.4 459.1L583.4 460.3L584.6 461.5L585.9 462.7L587.4 463.7L588.8 464.5L590.2 465.2L591.4 465.8L592.4 466.1M571.8 466.1L571.6 467.1L571.6 468.4L571.7 470.0L571.9 471.7L572.2 473.5L572.7 475.2L573.3 476.7L574.0 478.1L574.8 479.3L575.8 480.4L576.8 481.3L577.9 482.1L578.9 482.7L579.9 483.3L580.7 483.7L581.4 484.0M581.4 441.3L582.5 442.6L584.2 444.0L586.3 445.5L588.8 446.8L591.4 447.6L594.0 448.1L596.2 448.3L597.9 448.2M575.9 464.7L578.1 466.4L581.5 468.6L585.6 470.8L590.2 472.9L594.9 474.6L599.5 475.9L603.3 476.7L606.2 477.1M545.6 488.1L546.4 488.5L547.4 488.8L548.4 488.9L549.3 488.7L550.1 488.1L550.6 487.2L551.0 486.2L551.1 485.3M584.1 523.9L587.3 523.2L591.4 522.2L596.3 520.9L601.7 519.3L607.4 517.6L613.0 515.8L618.5 514.0L623.4 512.2L628.3 510.3L633.4 508.2L638.5 506.0L643.5 503.8L648.2 501.6L652.4 499.5L655.9 497.8L658.5 496.3" fill="none" stroke="#6f4f92" stroke-opacity="0.55" stroke-width="0.8"/>
<text transform="matrix(3.504,1.510,-2.093,2.878,723.3,406.0) skewX(-30)" x="0" y="7.7" font-family="Liberation Serif" font-style="italic" font-weight="bold" font-size="22" text-anchor="middle" textLength="68" lengthAdjust="spacingAndGlyphs" fill="#7d59a0">camping</text>
<text transform="matrix(3.504,1.510,-2.093,2.878,722.9,403.1) skewX(-30)" x="0" y="7.7" font-family="Liberation Serif" font-style="italic" font-weight="bold" font-size="22" text-anchor="middle" textLength="68" lengthAdjust="spacingAndGlyphs" fill="url(#gTop)">camping</text>
<text transform="matrix(3.548,1.675,-2.458,3.188,519.8,532.8) skewX(-22)" x="0" y="4.2" font-family="Liberation Serif" font-style="italic" font-weight="bold" font-size="12" text-anchor="middle" textLength="40" lengthAdjust="spacingAndGlyphs" fill="#7d59a0">is my</text>
<text transform="matrix(3.548,1.675,-2.458,3.188,519.1,530.0) skewX(-22)" x="0" y="4.2" font-family="Liberation Serif" font-style="italic" font-weight="bold" font-size="12" text-anchor="middle" textLength="40" lengthAdjust="spacingAndGlyphs" fill="url(#gTop)">is my</text>
<text transform="matrix(3.762,1.783,-2.348,3.389,664.6,610.2) skewX(-8)" x="0" y="5.2" font-family="Liberation Sans" font-style="normal" font-weight="bold" font-size="15" text-anchor="middle" textLength="41" lengthAdjust="spacingAndGlyphs" fill="#7d59a0">HAPPY</text>
<text transform="matrix(3.762,1.783,-2.348,3.389,664.2,607.4) skewX(-8)" x="0" y="5.2" font-family="Liberation Sans" font-style="normal" font-weight="bold" font-size="15" text-anchor="middle" textLength="41" lengthAdjust="spacingAndGlyphs" fill="url(#gTop)">HAPPY</text>
<text transform="matrix(3.682,1.793,-2.518,3.408,538.9,618.2) skewX(-22)" x="0" y="5.2" font-family="Liberation Serif" font-style="italic" font-weight="bold" font-size="15" text-anchor="middle" textLength="41" lengthAdjust="spacingAndGlyphs" fill="#7d59a0">place</text>
<text transform="matrix(3.682,1.793,-2.518,3.408,538.2,615.5) skewX(-22)" x="0" y="5.2" font-family="Liberation Serif" font-style="italic" font-weight="bold" font-size="15" text-anchor="middle" textLength="41" lengthAdjust="spacingAndGlyphs" fill="url(#gTop)">place</text>
<path d="M534.6 500.5L707.0 457.0M504.3 492.2L740.0 602.0" fill="none" stroke="#7a5a9c" stroke-opacity="0.6" stroke-width="3.2" stroke-linecap="round" transform="translate(0,0.8)"/>
<path d="M534.6 500.5L707.0 457.0M504.3 492.2L740.0 602.0" fill="none" stroke="#a57cc8" stroke-width="2.6" stroke-linecap="round"/>
<path d="M755.8 488Q735 505 784.4 536M773 486Q745 508 774 530" fill="none" stroke="#9d74bd" stroke-width="3" stroke-linecap="round"/>
<path d="M661.2 515.6L661.2 548.6M671.3 442.7L694.2 520.1M697.7 540.0L710.7 582.4" fill="none" stroke="#5d4a70" stroke-width="1" stroke-dasharray="2 2"/>
<path d="M620.0 404.7L621.8 408.0L626.8 408.3L623.0 410.6L624.2 414.1L620.0 412.2L615.8 414.1L616.9 410.6L613.2 408.3L618.1 408.0Z" fill="#a57cc8" stroke="#7a5a9c" stroke-width="0.8" stroke-opacity="0.6"/>
<path d="M634.2 440.4L636.1 443.7L641.0 444.0L637.3 446.3L638.4 449.8L634.2 447.9L630.0 449.8L631.2 446.3L627.4 444.0L632.3 443.7Z" fill="#a57cc8" stroke="#7a5a9c" stroke-width="0.8" stroke-opacity="0.6"/>
<path d="M727.0 437.5L728.9 440.8L733.8 441.1L730.0 443.4L731.2 446.9L727.0 445.1L722.8 446.9L723.9 443.4L720.2 441.1L725.1 440.8Z" fill="#a57cc8" stroke="#7a5a9c" stroke-width="0.8" stroke-opacity="0.6"/>
<path d="M724.1 483.2L726.0 486.5L730.9 486.8L727.2 489.1L728.3 492.6L724.1 490.7L719.9 492.6L721.1 489.1L717.3 486.8L722.2 486.5Z" fill="#a57cc8" stroke="#7a5a9c" stroke-width="0.8" stroke-opacity="0.6"/></g></g>
<path d="M647.8 401L661 486" stroke="#1a6ee8" stroke-width="2.3"/>
<path d="M675.3 505.5L818 570" stroke="#d81e26" stroke-width="2.2"/>
<path d="M656.4 512L566 636.3" stroke="#1f9c42" stroke-width="2.0"/>
<polygon points="640.6,369.3 658,376.5 659,388.8 650.9,401.2 632.3,396 630.3,382.6" fill="#1a6ee8"/>
<polygon points="823.1,559.5 841.4,567.7 842,580 833.3,591.7 817,584 816,571.7" fill="#d81e26"/>
<polygon points="552.9,630.8 570.3,639.5 573,650.4 562.7,663.5 545.3,654.8 542.6,646" fill="#21a043"/>
<polygon points="662.2,485.5 675.6,494.8 677.6,502 669.4,515.3 651.9,507.1 650.5,497.9" fill="#ffffff"/>
</svg>
<div id="panel">
  <div class="lbl" style="left:16px;top:26px;color:#e2242c">X</div>
  <div class="lbl" style="left:16px;top:67px;color:#3aa43c">Y</div>
  <div class="lbl" style="left:16px;top:108px;color:#2f73e6">Z</div>
  <div class="fld focus" style="left:33px;top:16px"><span class="v">101.8641</span><span class="u">mm</span></div>
  <div class="fld focus" style="left:220px;top:16px"><span class="v">100</span><span class="u">%</span></div>
  <div class="fld" style="left:33px;top:57px"><span class="v">125.3191</span><span class="u">mm</span></div>
  <div class="fld" style="left:220px;top:57px"><span class="v">100</span><span class="u">%</span></div>
  <div class="fld" style="left:33px;top:98px"><span class="v">32</span><span class="u">mm</span></div>
  <div class="fld" style="left:220px;top:98px"><span class="v">100</span><span class="u">%</span></div>
  <div class="cb" style="top:151px"></div>
  <div class="cbt" style="top:154px;font-size:14px">Snap Scaling</div>
  <div class="cb" style="top:187px"></div>
  <div class="cbt" style="top:191px">Uniform Scaling</div>
  <svg class="abs" style="left:0;top:0;overflow:visible" width="1" height="1">
    <g transform="translate(-14,-245)" fill="none" stroke="#0b0a3a" stroke-width="2.2" stroke-linecap="round" stroke-linejoin="round">
    <path d="M69 428.3 A9.5 9.5 0 1 0 78.4 418.3 L70 418.3"/>
    <path d="M74.6 413.4 L69.7 418.3 L74.6 423.2"/>
    </g>
  </svg>
</div>
<svg class="abs" style="left:0;top:0" width="20" height="300" viewBox="0 0 20 300"><polygon points="14.6,264 0.8,277.5 14.6,291" fill="#fff"/><path d="M13.5 264.5 L0.8 277.5 L13.5 290.5" fill="none" stroke="#c6c6c6" stroke-width="1"/></svg>
<svg class="abs" style="left:0;top:0" width="200" height="160" viewBox="0 0 200 160">
  <rect x="91" y="56" width="91" height="98" fill="#fff"/>
  <path d="M98 59.5Q98 56 101.5 56L143 56L143 79Q143 86.5 150.5 86.5L173 86.5L173 145.5Q173 149 169.5 149L101.5 149Q98 149 98 145.5Z" fill="#3e48cb"/>
  <path d="M146.5 56.5L173 83L151 83Q146.5 83 146.5 78.5Z" fill="#3e48cb"/>
  <rect x="89" y="66.5" width="42" height="31" rx="5" fill="#fff"/>
  <path d="M91 69H125Q128 69 128 72V91Q128 94 125 94H91Z" fill="#3e48cb"/>
  <text x="92.5" y="86.5" font-family="Liberation Sans" font-weight="bold" font-size="12.8" fill="#fff">STL</text>
  <rect x="110.8" y="102.8" width="49" height="4.8" fill="#fff"/>
  <rect x="110.8" y="117.5" width="49" height="4.6" fill="#fff"/>
  <rect x="110.8" y="131.8" width="49" height="4.8" fill="#fff"/>
</svg>
<svg class="abs" style="left:0;top:670px" width="220" height="156" viewBox="0 670 220 156">
  <polyline points="15.8,691.6 21,686.5 26.3,691.6" fill="none" stroke="#6d6d6d" stroke-width="1.6"/>
  <path d="M20.5 732 L19.6 729.3 L29.8 719.2 L32.4 721.8 L22.2 732 Z" fill="#666"/>
  <rect x="16" y="734.5" width="17.5" height="2.2" fill="#666"/>
  <g fill="none" stroke="#0b0b3e" stroke-width="2.8" stroke-linejoin="round">
    <path d="M29.6 791.3 L41.3 797.3 L41.3 811 L29.6 816.2 L17.8 811 L17.8 797.3 Z M17.8 797.3 L29.6 803 L41.3 797.3 M29.6 803 L29.6 816.2"/>
  </g>
  <g fill="none" stroke="#666" stroke-width="2.6" stroke-linejoin="round">
    <path d="M58.8 799.5 L65 792.5 L81 792.5 L81 808 L75 814.8 L58.8 814.8 Z M58.8 799.5 L75 799.5 L81 792.5 M75 799.5 L75 814.8"/>
    <path d="M98.5 799.5 L105 792.5 L121 792.5 L121 808 L115 814.8 L98.5 814.8 Z M98.5 799.5 L115 799.5 L121 792.5 M115 799.5 L115 814.8"/>
    <path d="M138.3 792.5 L154.5 792.5 L160.8 799.5 L160.8 814.8 L144.5 814.8 L138.3 808 Z M138.3 792.5 L144.5 799.5 L160.8 799.5 M144.5 799.5 L144.5 814.8"/>
    <path d="M178.5 799.5 L185 792.5 L201 792.5 L201 808 L195 814.8 L178.5 814.8 Z M178.5 799.5 L195 799.5 L201 792.5 M195 799.5 L195 814.8"/>
  </g>
  <g fill="#666">
    <rect x="58.8" y="799.5" width="16.2" height="15.3"/>
    <path d="M98.5 799.5 L105 792.5 L121 792.5 L115 799.5 Z"/>
    <path d="M138.3 792.5 L144.5 799.5 L144.5 814.8 L138.3 808 Z"/>
    <path d="M195 799.5 L201 792.5 L201 808 L195 814.8 Z"/>
  </g>
</svg>
<div class="abs gray" style="left:46px;top:683px;font-size:14.5px;line-height:16px;color:#5c5c5c">Object list</div>
<div class="abs gray" style="left:55px;top:720px;font-size:14.5px;line-height:16px;color:#5c5c5c;letter-spacing:-0.8px">STL1056</div>
<div class="abs gray" style="left:13px;top:753px;font-size:14px;line-height:16px;color:#5c5c5c">101.9 x 125.3 x 32.0 mm</div>
</body></html>
